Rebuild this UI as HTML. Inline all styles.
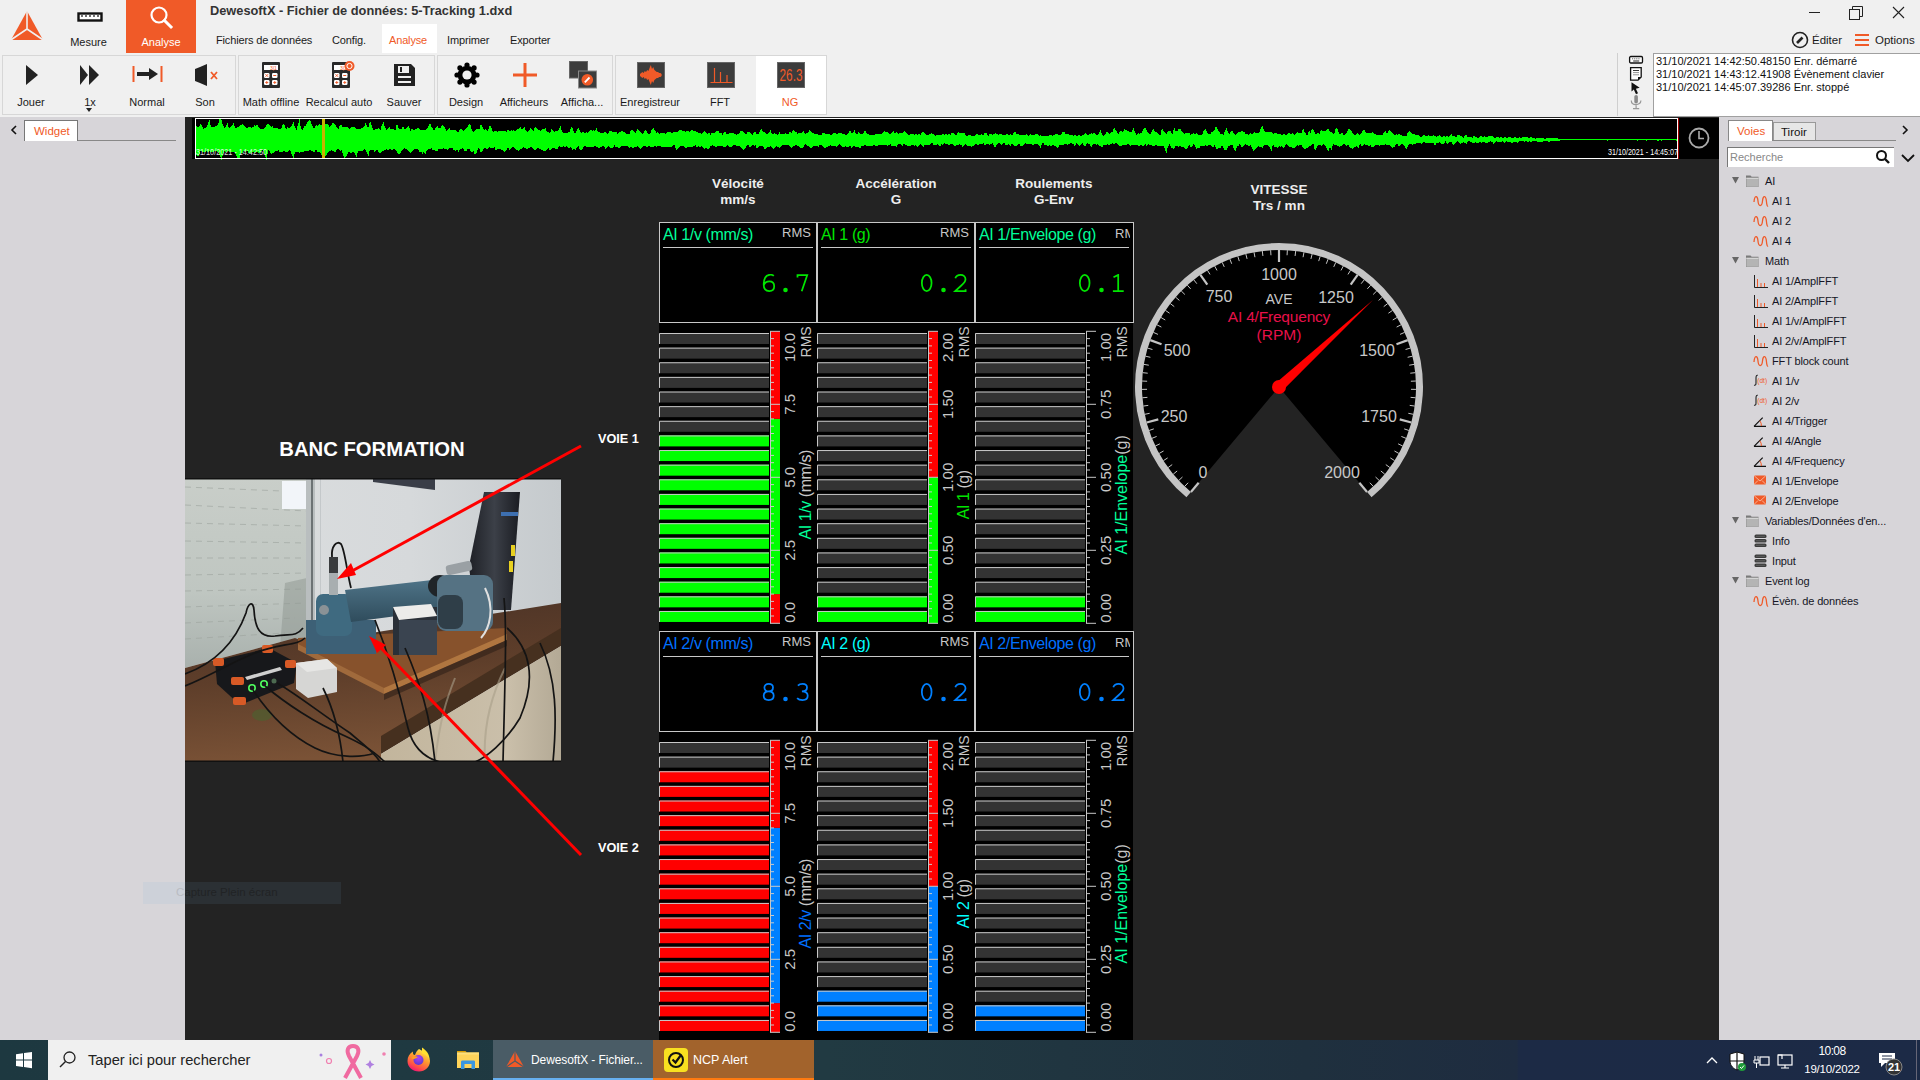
<!DOCTYPE html><html><head><meta charset="utf-8"><style>
*{box-sizing:border-box}
body{margin:0;width:1920px;height:1080px;position:relative;overflow:hidden;background:#f0f0f0;font-family:'Liberation Sans', sans-serif;}
.a{position:absolute}
.t{position:absolute;white-space:nowrap;line-height:1}
.tb{position:absolute;font-size:11px;color:#1a1a1a;white-space:nowrap;line-height:1;text-align:center}
.grp{position:absolute;top:55px;height:60px;border:1px solid #d7d7d7}
.tree{position:absolute;font-size:11px;letter-spacing:-0.15px;color:#151525;white-space:nowrap;line-height:1}
</style></head><body>

<svg class="a" style="left:8px;top:9px" width="40" height="36" viewBox="0 0 40 36">
<polygon points="19,2 3,31 35,31" fill="#f05a28"/>
<path d="M19,2 L19,20 M19,20 L2,31.5 M19,20 L36,31.5" stroke="#f0f0f0" stroke-width="1.6" fill="none"/>
</svg>
<svg class="a" style="left:77px;top:12px" width="26" height="11"><rect x="1.5" y="1.5" width="23" height="7" fill="#fff" stroke="#111" stroke-width="2.4"/>
<path d="M5,3 v2 M9,3 v2 M13,3 v2 M17,3 v2 M21,3 v2" stroke="#111" stroke-width="1.2"/></svg>
<div class="tb" style="left:60px;top:37px;width:57px">Mesure</div>
<div class="a" style="left:126px;top:0;width:70px;height:53px;background:#f05a28"></div>
<svg class="a" style="left:148px;top:5px" width="28" height="26"><circle cx="11" cy="10" r="7.5" fill="none" stroke="#fff" stroke-width="2.2"/><path d="M16.5,15.5 L23,22" stroke="#fff" stroke-width="3" stroke-linecap="square"/></svg>
<div class="tb" style="left:126px;top:37px;width:70px;color:#fff">Analyse</div>
<div class="t" style="left:210px;top:5px;font-size:12.8px;font-weight:bold;color:#333">DewesoftX - Fichier de données: 5-Tracking 1.dxd</div>
<div class="a" style="left:382px;top:24px;width:55px;height:29px;background:#fff"></div>
<div class="t" style="left:216px;top:35px;font-size:11px;letter-spacing:-0.15px;color:#1a1a1a">Fichiers de données</div>
<div class="t" style="left:332px;top:35px;font-size:11px;letter-spacing:-0.15px;color:#1a1a1a">Config.</div>
<div class="t" style="left:389px;top:35px;font-size:11px;letter-spacing:-0.15px;color:#f05a28">Analyse</div>
<div class="t" style="left:447px;top:35px;font-size:11px;letter-spacing:-0.15px;color:#1a1a1a">Imprimer</div>
<div class="t" style="left:510px;top:35px;font-size:11px;letter-spacing:-0.15px;color:#1a1a1a">Exporter</div>
<svg class="a" style="left:1800px;top:0" width="120" height="26">
<path d="M9,12.5 h11" stroke="#222" stroke-width="1"/>
<rect x="49.5" y="9.5" width="10" height="10" fill="none" stroke="#222" stroke-width="1"/>
<path d="M52.5,9.5 v-3 h10 v10 h-3" fill="none" stroke="#222" stroke-width="1"/>
<path d="M93,7 L104,18 M104,7 L93,18" stroke="#222" stroke-width="1.1"/>
</svg>
<svg class="a" style="left:1790px;top:30px" width="20" height="20"><circle cx="10" cy="10" r="7.5" fill="none" stroke="#222" stroke-width="1.6"/><path d="M7,13 L12.5,7.5" stroke="#222" stroke-width="2.6"/></svg>
<div class="t" style="left:1812px;top:35px;font-size:11.5px;color:#1a1a1a">Éditer</div>
<svg class="a" style="left:1854px;top:33px" width="16" height="14"><path d="M1,2 h14 M1,7 h14 M1,12 h14" stroke="#f05a28" stroke-width="2"/></svg>
<div class="t" style="left:1875px;top:35px;font-size:11.5px;color:#1a1a1a">Options</div>
<div class="grp" style="left:2px;width:234px"></div>
<div class="grp" style="left:238px;width:197px"></div>
<div class="grp" style="left:437px;width:176px"></div>
<div class="grp" style="left:615px;width:212px"></div>
<div class="a" style="left:756px;top:56px;width:70px;height:58px;background:#fff"></div>
<svg class="a" style="left:20px;top:62px" width="24" height="26"><polygon points="6,3 18,13 6,23" fill="#222"/></svg>
<div class="tb" style="left:-14px;top:97px;width:90px;color:#1a1a1a">Jouer</div>
<svg class="a" style="left:76px;top:62px" width="28" height="26"><polygon points="4,3 12,13 4,23" fill="#222"/><polygon points="13,3 23,13 13,23" fill="#222"/></svg>
<div class="tb" style="left:45px;top:97px;width:90px;color:#1a1a1a">1x</div>
<svg class="a" style="left:86px;top:108px" width="8" height="5"><polygon points="0,0 6,0 3,4" fill="#222"/></svg>
<svg class="a" style="left:130px;top:63px" width="34" height="24"><path d="M3.5,3 v16 M31.5,3 v16" stroke="#f05a28" stroke-width="2"/><path d="M7,11 h16" stroke="#222" stroke-width="4"/><polygon points="19,5 28,11 19,17" fill="#222"/></svg>
<div class="tb" style="left:102px;top:97px;width:90px;color:#1a1a1a">Normal</div>
<svg class="a" style="left:192px;top:62px" width="30" height="26"><polygon points="3,7 8,5 15,2 15,24 8,21 3,19" fill="#222"/><path d="M19,10 L25,17 M25,10 L19,17" stroke="#f05a28" stroke-width="1.8"/></svg>
<div class="tb" style="left:160px;top:97px;width:90px;color:#1a1a1a">Son</div>
<svg class="a" style="left:260px;top:61px" width="30" height="28"><rect x="2" y="1" width="18" height="26" rx="1" fill="#2a2a2a"/><rect x="4" y="4" width="14" height="5" fill="#fff"/><text x="10" y="8.5" font-size="5" fill="#f05a28" font-family="Liberation Sans">3|1</text><rect x="4" y="12" width="5.5" height="5" rx="1.2" fill="#fff"/><path d="M5.45,13.2 L8.05,15.8 M8.05,13.2 L5.45,15.8" stroke="#f05a28" stroke-width="0.9"/><rect x="12" y="12" width="5.5" height="5" rx="1.2" fill="#fff"/><path d="M13.25,14.5 H16.25" stroke="#f05a28" stroke-width="1"/><rect x="4" y="19" width="5.5" height="5" rx="1.2" fill="#fff"/><path d="M5.25,21.5 H8.25 M6.75,20.0 V23.0" stroke="#f05a28" stroke-width="0.9"/><rect x="12" y="19" width="5.5" height="5" rx="1.2" fill="#fff"/><path d="M13.25,21.5 H16.25 M14.75,20.0 V23.0" stroke="#f05a28" stroke-width="0.9"/></svg>
<div class="tb" style="left:226px;top:97px;width:90px;color:#1a1a1a">Math offline</div>
<svg class="a" style="left:330px;top:61px" width="30" height="28"><rect x="2" y="1" width="18" height="26" rx="1" fill="#2a2a2a"/><rect x="4" y="4" width="14" height="5" fill="#fff"/><text x="10" y="8.5" font-size="5" fill="#f05a28" font-family="Liberation Sans">3|1</text><rect x="4" y="12" width="5.5" height="5" rx="1.2" fill="#fff"/><path d="M5.45,13.2 L8.05,15.8 M8.05,13.2 L5.45,15.8" stroke="#f05a28" stroke-width="0.9"/><rect x="12" y="12" width="5.5" height="5" rx="1.2" fill="#fff"/><path d="M13.25,14.5 H16.25" stroke="#f05a28" stroke-width="1"/><rect x="4" y="19" width="5.5" height="5" rx="1.2" fill="#fff"/><path d="M5.25,21.5 H8.25 M6.75,20.0 V23.0" stroke="#f05a28" stroke-width="0.9"/><rect x="12" y="19" width="5.5" height="5" rx="1.2" fill="#fff"/><path d="M13.25,21.5 H16.25 M14.75,20.0 V23.0" stroke="#f05a28" stroke-width="0.9"/><circle cx="19.5" cy="5" r="5" fill="#f05a28"/><circle cx="19.5" cy="5" r="2.6" fill="none" stroke="#fff" stroke-width="1"/></svg>
<div class="tb" style="left:294px;top:97px;width:90px;color:#1a1a1a">Recalcul auto</div>
<svg class="a" style="left:392px;top:63px" width="26" height="24"><path d="M2,1 h17 l4,4 v18 h-21 z" fill="#222"/><rect x="6" y="3" width="11" height="7" fill="#f0f0f0"/><rect x="8" y="4" width="2" height="5" fill="#222"/><rect x="6" y="13" width="13" height="2" fill="#f0f0f0"/><rect x="6" y="18" width="13" height="2" fill="#f0f0f0"/></svg>
<div class="tb" style="left:359px;top:97px;width:90px;color:#1a1a1a">Sauver</div>
<svg class="a" style="left:454px;top:62px" width="26" height="26" viewBox="-13 -13 26 26"><circle cx="10.00" cy="0.00" r="2.6" fill="#000"/><circle cx="7.07" cy="7.07" r="2.6" fill="#000"/><circle cx="0.00" cy="10.00" r="2.6" fill="#000"/><circle cx="-7.07" cy="7.07" r="2.6" fill="#000"/><circle cx="-10.00" cy="0.00" r="2.6" fill="#000"/><circle cx="-7.07" cy="-7.07" r="2.6" fill="#000"/><circle cx="-0.00" cy="-10.00" r="2.6" fill="#000"/><circle cx="7.07" cy="-7.07" r="2.6" fill="#000"/><circle r="9.3" fill="#000"/><circle r="4.6" fill="#f0f0f0"/></svg>
<div class="tb" style="left:421px;top:97px;width:90px;color:#1a1a1a">Design</div>
<svg class="a" style="left:512px;top:62px" width="26" height="26"><path d="M13,1 v24 M1,13 h24" stroke="#f05a28" stroke-width="3"/></svg>
<div class="tb" style="left:479px;top:97px;width:90px;color:#1a1a1a">Afficheurs</div>
<svg class="a" style="left:568px;top:60px" width="30" height="30"><rect x="1.5" y="1.5" width="18" height="16.5" fill="#3c3c3c" stroke="#666" stroke-width="1"/><rect x="10.5" y="11" width="18" height="17" fill="#3c3c3c" stroke="#888" stroke-width="1"/><circle cx="19.3" cy="19.8" r="5.8" fill="#f05a28"/><path d="M16.8,22.3 L21.5,17.5" stroke="#fff" stroke-width="1.8"/></svg>
<div class="tb" style="left:537px;top:97px;width:90px;color:#1a1a1a">Afficha...</div>
<svg class="a" style="left:637px;top:62px" width="28" height="26"><rect x="0.5" y="0.5" width="27" height="25" fill="#3c3c3c" stroke="#666"/><path d="M3,13 L3.0,12 L4.2,11 L5.4,10 L6.6,11 L7.8,9 L9.0,10 L10.2,8 L11.4,9 L12.6,6 L13.8,3 L15.0,7 L16.2,5 L17.4,8 L18.6,9 L19.8,10 L21.0,10 L22.2,11 L23.4,11 L24.6,12 L24.6,14 L23.4,15 L22.2,15 L21.0,16 L19.8,16 L18.6,17 L17.4,18 L16.2,21 L15.0,19 L13.8,23 L12.6,20 L11.4,17 L10.2,18 L9.0,16 L7.8,17 L6.6,15 L5.4,16 L4.2,15 L3.0,14 Z" fill="#f05a28"/></svg>
<div class="tb" style="left:605px;top:97px;width:90px;color:#1a1a1a">Enregistreur</div>
<svg class="a" style="left:707px;top:62px" width="28" height="26"><rect x="0.5" y="0.5" width="27" height="25" fill="#3c3c3c" stroke="#666"/><path d="M3.5,20.5 h22 M7.5,20 v-14 M13.5,20 v-10 M20,20 v-7" stroke="#f05a28" stroke-width="1.2"/></svg>
<div class="tb" style="left:675px;top:97px;width:90px;color:#1a1a1a">FFT</div>
<svg class="a" style="left:777px;top:62px" width="28" height="26"><rect x="0.5" y="0.5" width="27" height="25" fill="#3c3c3c" stroke="#666"/><text x="2.5" y="19.3" font-size="16" fill="#f05a28" font-family="Liberation Sans" textLength="23" lengthAdjust="spacingAndGlyphs">26.3</text></svg>
<div class="tb" style="left:745px;top:97px;width:90px;color:#f05a28">NG</div>
<div class="a" style="left:1617px;top:53px;width:1px;height:63px;background:#cfcfcf"></div>
<svg class="a" style="left:1627px;top:54px" width="20" height="58">
<rect x="2.6" y="2.5" width="12.9" height="6.5" rx="1.2" fill="#fff" stroke="#111" stroke-width="1.3"/><path d="M5,4.8 h8.5" stroke="#555" stroke-width="0.9" stroke-dasharray="1.2,0.9"/><path d="M6.2,7 h6" stroke="#111" stroke-width="0.9"/>
<path d="M3.6,13.7 H14.2 V23 L11,26.1 H3.6 Z" fill="#fff" stroke="#111" stroke-width="1.3"/><path d="M14.2,23 L11,26.1 V23 Z" fill="#111"/><path d="M6,16.5 h6" stroke="#222" stroke-width="0.9"/><path d="M6,18.6 h6 M6,20.8 h6" stroke="#888" stroke-width="0.9"/>
<polygon points="4.5,28.2 4.5,37.5 6.8,35.6 9,40.2 11,39.2 8.9,34.8 12.7,33.8" fill="#111"/>
<rect x="7.3" y="41" width="3.6" height="8.5" rx="1.8" fill="#8a8a8a"/><path d="M4.3,46.5 C4.3,52 13.9,52 13.9,46.5" stroke="#999" stroke-width="1.2" fill="none"/><path d="M9.1,51.3 V54.5 M6,54.6 h6.2" stroke="#999" stroke-width="1.2"/>
</svg>
<div class="a" style="left:1653px;top:53px;width:267px;height:64px;background:#fff;border:1px solid #a0a0a0;border-right:none"></div>
<div class="t" style="left:1656px;top:56px;font-size:11px;color:#111">31/10/2021 14:42:50.48150 Enr. démarré</div>
<div class="t" style="left:1656px;top:69px;font-size:11px;color:#111">31/10/2021 14:43:12.41908 Évènement clavier</div>
<div class="t" style="left:1656px;top:82px;font-size:11px;color:#111">31/10/2021 14:45:07.39286 Enr. stoppé</div>
<div class="a" style="left:0;top:117px;width:185px;height:923px;background:#d7d5d9"></div>
<svg class="a" style="left:9px;top:124px" width="10" height="12"><path d="M7,2 L3,6 L7,10" stroke="#111" stroke-width="1.6" fill="none"/></svg>
<div class="a" style="left:24px;top:120px;width:54px;height:21px;background:#fff;border:1px solid #777;border-bottom:none"></div>
<div class="a" style="left:78px;top:140px;width:98px;height:1px;background:#888"></div>
<div class="t" style="left:34px;top:126px;font-size:11.5px;color:#f05a28">Widget</div>
<div class="a" style="left:185px;top:117px;width:1534px;height:923px;background:#232323"></div>
<div class="a" style="left:192px;top:118px;width:1527px;height:41px;background:#000"></div>
<svg class="a" style="left:0;top:0" width="1720" height="160"><path d="M196,126.0 L197.5,127.1 L199.0,127.3 L200.5,124.0 L202.0,125.5 L203.5,128.6 L205.0,127.9 L206.5,127.3 L208.0,123.2 L209.5,119.8 L211.0,127.6 L212.5,126.6 L214.0,127.6 L215.5,126.4 L217.0,125.7 L218.5,123.0 L220.0,117.6 L221.5,120.1 L223.0,125.2 L224.5,127.8 L226.0,126.7 L227.5,123.1 L229.0,128.7 L230.5,127.1 L232.0,125.6 L233.5,122.6 L235.0,128.4 L236.5,127.6 L238.0,127.4 L239.5,125.5 L241.0,125.3 L242.5,124.0 L244.0,125.5 L245.5,127.3 L247.0,128.8 L248.5,126.9 L250.0,126.7 L251.5,127.7 L253.0,127.3 L254.5,125.0 L256.0,125.8 L257.5,124.6 L259.0,128.0 L260.5,128.6 L262.0,128.6 L263.5,128.5 L265.0,128.2 L266.5,125.2 L268.0,123.3 L269.5,124.7 L271.0,127.0 L272.5,126.1 L274.0,128.2 L275.5,127.7 L277.0,127.7 L278.5,128.5 L280.0,129.4 L281.5,128.4 L283.0,123.0 L284.5,125.0 L286.0,129.2 L287.5,127.4 L289.0,127.8 L290.5,127.0 L292.0,125.3 L293.5,121.8 L295.0,127.5 L296.5,129.6 L298.0,124.8 L299.5,119.0 L301.0,129.2 L302.5,129.6 L304.0,126.7 L305.5,126.0 L307.0,122.3 L308.5,120.5 L310.0,120.2 L311.5,123.8 L313.0,127.4 L314.5,128.1 L316.0,124.5 L317.5,126.1 L319.0,124.4 L320.5,124.6 L322.0,124.9 L323.5,128.0 L325.0,124.8 L326.5,123.9 L328.0,123.5 L329.5,126.7 L331.0,125.7 L332.5,122.9 L334.0,123.1 L335.5,124.7 L337.0,127.8 L338.5,129.0 L340.0,125.1 L341.5,124.8 L343.0,127.4 L344.5,126.9 L346.0,127.4 L347.5,127.0 L349.0,129.1 L350.5,127.9 L352.0,126.8 L353.5,126.6 L355.0,127.9 L356.5,129.4 L358.0,129.3 L359.5,128.9 L361.0,128.4 L362.5,128.2 L364.0,126.8 L365.5,123.1 L367.0,126.4 L368.5,127.2 L370.0,121.3 L371.5,124.6 L373.0,129.5 L374.5,130.1 L376.0,128.8 L377.5,129.4 L379.0,128.0 L380.5,130.4 L382.0,124.4 L383.5,122.3 L385.0,127.3 L386.5,129.7 L388.0,128.2 L389.5,127.1 L391.0,129.3 L392.5,128.5 L394.0,129.6 L395.5,130.1 L397.0,123.0 L398.5,127.5 L400.0,129.6 L401.5,129.0 L403.0,125.6 L404.5,128.5 L406.0,129.2 L407.5,126.8 L409.0,126.3 L410.5,130.6 L412.0,128.9 L413.5,129.8 L415.0,129.6 L416.5,129.0 L418.0,127.6 L419.5,129.4 L421.0,130.0 L422.5,130.2 L424.0,130.1 L425.5,130.4 L427.0,128.5 L428.5,126.5 L430.0,123.1 L431.5,127.0 L433.0,129.2 L434.5,130.5 L436.0,127.4 L437.5,126.0 L439.0,128.4 L440.5,127.8 L442.0,125.2 L443.5,125.8 L445.0,128.2 L446.5,130.6 L448.0,129.6 L449.5,128.4 L451.0,130.4 L452.5,129.5 L454.0,130.5 L455.5,130.0 L457.0,131.7 L458.5,131.9 L460.0,129.2 L461.5,128.9 L463.0,131.0 L464.5,129.5 L466.0,129.0 L467.5,127.0 L469.0,123.5 L470.5,125.1 L472.0,130.3 L473.5,132.1 L475.0,130.6 L476.5,129.3 L478.0,128.5 L479.5,129.1 L481.0,123.6 L482.5,127.1 L484.0,130.0 L485.5,128.5 L487.0,131.4 L488.5,129.3 L490.0,124.9 L491.5,128.1 L493.0,131.9 L494.5,130.9 L496.0,130.5 L497.5,132.2 L499.0,131.1 L500.5,130.5 L502.0,130.6 L503.5,130.6 L505.0,130.9 L506.5,131.6 L508.0,129.6 L509.5,131.3 L511.0,130.3 L512.5,130.7 L514.0,130.4 L515.5,130.9 L517.0,129.4 L518.5,129.5 L520.0,126.6 L521.5,128.6 L523.0,128.9 L524.5,126.7 L526.0,131.2 L527.5,131.5 L529.0,130.5 L530.5,128.1 L532.0,129.3 L533.5,130.9 L535.0,126.8 L536.5,127.7 L538.0,130.2 L539.5,130.2 L541.0,131.0 L542.5,128.6 L544.0,129.1 L545.5,127.9 L547.0,132.1 L548.5,132.2 L550.0,132.8 L551.5,129.2 L553.0,130.7 L554.5,131.7 L556.0,130.9 L557.5,130.9 L559.0,129.3 L560.5,126.4 L562.0,131.9 L563.5,133.2 L565.0,133.0 L566.5,133.0 L568.0,132.4 L569.5,132.2 L571.0,127.0 L572.5,128.5 L574.0,132.9 L575.5,133.0 L577.0,130.2 L578.5,127.9 L580.0,130.8 L581.5,133.5 L583.0,131.9 L584.5,133.3 L586.0,132.2 L587.5,132.5 L589.0,132.0 L590.5,129.7 L592.0,130.8 L593.5,130.4 L595.0,131.3 L596.5,128.2 L598.0,132.1 L599.5,131.8 L601.0,133.1 L602.5,133.2 L604.0,132.4 L605.5,132.0 L607.0,134.1 L608.5,132.6 L610.0,130.2 L611.5,131.3 L613.0,131.7 L614.5,132.0 L616.0,131.5 L617.5,134.0 L619.0,132.3 L620.5,131.9 L622.0,130.6 L623.5,132.3 L625.0,132.6 L626.5,134.2 L628.0,133.4 L629.5,134.1 L631.0,130.1 L632.5,130.2 L634.0,132.1 L635.5,133.1 L637.0,129.4 L638.5,129.7 L640.0,131.2 L641.5,133.2 L643.0,133.8 L644.5,130.6 L646.0,129.8 L647.5,133.2 L649.0,134.3 L650.5,132.9 L652.0,129.2 L653.5,128.4 L655.0,130.2 L656.5,132.7 L658.0,132.2 L659.5,134.2 L661.0,133.0 L662.5,132.9 L664.0,132.5 L665.5,133.6 L667.0,132.7 L668.5,131.9 L670.0,131.6 L671.5,132.8 L673.0,132.6 L674.5,131.8 L676.0,132.2 L677.5,132.0 L679.0,130.8 L680.5,129.5 L682.0,131.0 L683.5,131.0 L685.0,131.7 L686.5,131.4 L688.0,131.0 L689.5,132.4 L691.0,130.0 L692.5,129.9 L694.0,131.4 L695.5,131.1 L697.0,131.8 L698.5,133.2 L700.0,133.3 L701.5,133.6 L703.0,132.9 L704.5,131.4 L706.0,133.0 L707.5,133.6 L709.0,132.4 L710.5,134.5 L712.0,132.5 L713.5,133.3 L715.0,132.5 L716.5,131.3 L718.0,130.8 L719.5,132.5 L721.0,132.9 L722.5,134.6 L724.0,132.1 L725.5,132.3 L727.0,134.4 L728.5,133.7 L730.0,132.8 L731.5,133.3 L733.0,133.0 L734.5,133.9 L736.0,134.6 L737.5,134.4 L739.0,133.3 L740.5,131.1 L742.0,131.0 L743.5,132.5 L745.0,134.0 L746.5,133.8 L748.0,131.2 L749.5,132.3 L751.0,133.1 L752.5,134.7 L754.0,132.6 L755.5,132.0 L757.0,134.3 L758.5,134.0 L760.0,130.5 L761.5,129.3 L763.0,131.8 L764.5,131.7 L766.0,133.7 L767.5,133.8 L769.0,132.8 L770.5,129.8 L772.0,134.0 L773.5,133.5 L775.0,133.4 L776.5,134.4 L778.0,135.0 L779.5,132.3 L781.0,134.2 L782.5,133.6 L784.0,134.6 L785.5,133.3 L787.0,134.5 L788.5,134.3 L790.0,131.2 L791.5,133.0 L793.0,129.9 L794.5,131.4 L796.0,131.8 L797.5,133.6 L799.0,133.1 L800.5,133.3 L802.0,133.0 L803.5,130.7 L805.0,134.4 L806.5,133.2 L808.0,133.0 L809.5,130.4 L811.0,131.0 L812.5,132.9 L814.0,133.8 L815.5,133.9 L817.0,134.1 L818.5,135.0 L820.0,134.7 L821.5,134.9 L823.0,132.8 L824.5,133.2 L826.0,134.4 L827.5,134.0 L829.0,133.9 L830.5,134.8 L832.0,134.7 L833.5,133.2 L835.0,132.5 L836.5,134.1 L838.0,133.6 L839.5,133.3 L841.0,132.7 L842.5,134.3 L844.0,133.3 L845.5,135.3 L847.0,134.9 L848.5,133.2 L850.0,129.6 L851.5,133.1 L853.0,133.6 L854.5,130.1 L856.0,134.3 L857.5,133.6 L859.0,131.9 L860.5,133.9 L862.0,134.6 L863.5,133.2 L865.0,130.4 L866.5,132.8 L868.0,134.0 L869.5,135.5 L871.0,134.5 L872.5,134.7 L874.0,135.1 L875.5,134.2 L877.0,134.3 L878.5,134.3 L880.0,134.2 L881.5,134.4 L883.0,132.7 L884.5,130.9 L886.0,132.6 L887.5,131.8 L889.0,134.3 L890.5,133.7 L892.0,132.5 L893.5,130.6 L895.0,133.5 L896.5,131.5 L898.0,133.8 L899.5,133.1 L901.0,133.4 L902.5,133.1 L904.0,131.0 L905.5,132.4 L907.0,133.7 L908.5,135.2 L910.0,134.2 L911.5,134.4 L913.0,134.4 L914.5,134.5 L916.0,134.0 L917.5,135.2 L919.0,133.9 L920.5,134.9 L922.0,131.7 L923.5,132.1 L925.0,134.1 L926.5,135.1 L928.0,135.2 L929.5,134.5 L931.0,133.4 L932.5,133.7 L934.0,134.2 L935.5,135.7 L937.0,134.9 L938.5,134.8 L940.0,135.3 L941.5,134.7 L943.0,134.0 L944.5,134.7 L946.0,134.0 L947.5,135.2 L949.0,133.8 L950.5,135.3 L952.0,132.6 L953.5,133.4 L955.0,134.7 L956.5,135.3 L958.0,132.1 L959.5,133.2 L961.0,133.5 L962.5,132.6 L964.0,132.9 L965.5,134.5 L967.0,136.2 L968.5,134.9 L970.0,134.4 L971.5,136.1 L973.0,136.1 L974.5,135.8 L976.0,134.0 L977.5,134.2 L979.0,135.6 L980.5,134.5 L982.0,134.3 L983.5,135.0 L985.0,132.7 L986.5,132.7 L988.0,136.3 L989.5,134.5 L991.0,133.1 L992.5,135.1 L994.0,134.2 L995.5,133.4 L997.0,134.3 L998.5,134.6 L1000.0,133.7 L1001.5,133.5 L1003.0,135.2 L1004.5,135.3 L1006.0,134.5 L1007.5,134.2 L1009.0,136.0 L1010.5,134.1 L1012.0,135.5 L1013.5,132.6 L1015.0,131.5 L1016.5,134.0 L1018.0,134.1 L1019.5,135.0 L1021.0,134.9 L1022.5,134.5 L1024.0,135.9 L1025.5,134.5 L1027.0,134.1 L1028.5,135.5 L1030.0,134.0 L1031.5,135.1 L1033.0,135.0 L1034.5,134.7 L1036.0,134.3 L1037.5,134.4 L1039.0,135.8 L1040.5,135.3 L1042.0,135.7 L1043.5,135.5 L1045.0,136.0 L1046.5,136.1 L1048.0,135.9 L1049.5,134.8 L1051.0,134.7 L1052.5,135.9 L1054.0,135.3 L1055.5,133.5 L1057.0,133.9 L1058.5,135.0 L1060.0,135.6 L1061.5,134.0 L1063.0,131.5 L1064.5,132.2 L1066.0,134.4 L1067.5,133.6 L1069.0,134.5 L1070.5,135.3 L1072.0,135.0 L1073.5,136.3 L1075.0,134.9 L1076.5,135.5 L1078.0,135.5 L1079.5,134.7 L1081.0,136.2 L1082.5,134.9 L1084.0,134.4 L1085.5,132.6 L1087.0,134.5 L1088.5,134.7 L1090.0,133.8 L1091.5,133.4 L1093.0,133.7 L1094.5,133.0 L1096.0,135.2 L1097.5,135.4 L1099.0,132.7 L1100.5,129.7 L1102.0,134.7 L1103.5,136.4 L1105.0,134.7 L1106.5,132.1 L1108.0,132.1 L1109.5,134.2 L1111.0,132.7 L1112.5,131.8 L1114.0,127.1 L1115.5,129.9 L1117.0,132.2 L1118.5,134.2 L1120.0,130.5 L1121.5,131.5 L1123.0,131.5 L1124.5,128.8 L1126.0,130.1 L1127.5,130.7 L1129.0,131.8 L1130.5,132.3 L1132.0,131.4 L1133.5,128.4 L1135.0,132.9 L1136.5,134.7 L1138.0,133.2 L1139.5,133.8 L1141.0,133.1 L1142.5,131.5 L1144.0,127.1 L1145.5,128.4 L1147.0,131.5 L1148.5,133.1 L1150.0,134.8 L1151.5,132.2 L1153.0,128.3 L1154.5,131.3 L1156.0,131.8 L1157.5,133.0 L1159.0,134.5 L1160.5,134.8 L1162.0,128.3 L1163.5,131.0 L1165.0,133.2 L1166.5,134.1 L1168.0,130.6 L1169.5,130.8 L1171.0,131.8 L1172.5,134.4 L1174.0,127.3 L1175.5,130.8 L1177.0,131.3 L1178.5,129.4 L1180.0,128.4 L1181.5,131.0 L1183.0,132.0 L1184.5,133.6 L1186.0,132.6 L1187.5,132.9 L1189.0,132.6 L1190.5,134.5 L1192.0,133.8 L1193.5,133.2 L1195.0,134.0 L1196.5,133.3 L1198.0,134.4 L1199.5,135.2 L1201.0,134.7 L1202.5,134.2 L1204.0,130.0 L1205.5,129.1 L1207.0,132.5 L1208.5,134.3 L1210.0,134.1 L1211.5,132.4 L1213.0,132.3 L1214.5,129.6 L1216.0,125.5 L1217.5,129.4 L1219.0,131.6 L1220.5,133.8 L1222.0,133.4 L1223.5,134.7 L1225.0,130.8 L1226.5,127.9 L1228.0,133.2 L1229.5,134.0 L1231.0,131.7 L1232.5,131.1 L1234.0,133.9 L1235.5,135.1 L1237.0,133.1 L1238.5,132.0 L1240.0,132.4 L1241.5,131.2 L1243.0,131.4 L1244.5,132.3 L1246.0,134.3 L1247.5,134.3 L1249.0,134.7 L1250.5,133.2 L1252.0,134.0 L1253.5,132.6 L1255.0,132.3 L1256.5,133.1 L1258.0,133.7 L1259.5,132.3 L1261.0,128.0 L1262.5,126.3 L1264.0,130.7 L1265.5,132.1 L1267.0,131.5 L1268.5,131.9 L1270.0,132.6 L1271.5,132.3 L1273.0,133.8 L1274.5,133.2 L1276.0,132.5 L1277.5,134.1 L1279.0,133.4 L1280.5,133.9 L1282.0,135.4 L1283.5,133.9 L1285.0,134.8 L1286.5,134.6 L1288.0,133.5 L1289.5,133.3 L1291.0,134.0 L1292.5,132.8 L1294.0,134.8 L1295.5,134.5 L1297.0,131.7 L1298.5,133.5 L1300.0,132.2 L1301.5,133.5 L1303.0,127.6 L1304.5,131.5 L1306.0,134.5 L1307.5,135.3 L1309.0,130.2 L1310.5,132.9 L1312.0,128.1 L1313.5,129.6 L1315.0,133.9 L1316.5,134.3 L1318.0,132.8 L1319.5,133.8 L1321.0,130.4 L1322.5,130.5 L1324.0,130.9 L1325.5,131.1 L1327.0,129.1 L1328.5,129.0 L1330.0,132.2 L1331.5,131.8 L1333.0,134.1 L1334.5,133.0 L1336.0,127.5 L1337.5,128.9 L1339.0,133.8 L1340.5,133.8 L1342.0,132.0 L1343.5,135.3 L1345.0,134.2 L1346.5,133.2 L1348.0,129.5 L1349.5,129.2 L1351.0,130.5 L1352.5,132.7 L1354.0,134.9 L1355.5,134.6 L1357.0,133.1 L1358.5,134.2 L1360.0,135.1 L1361.5,133.1 L1363.0,130.7 L1364.5,130.0 L1366.0,132.6 L1367.5,133.3 L1369.0,132.8 L1370.5,133.3 L1372.0,132.3 L1373.5,132.7 L1375.0,134.2 L1376.5,134.9 L1378.0,134.9 L1379.5,134.9 L1381.0,135.0 L1382.5,134.8 L1384.0,132.4 L1385.5,131.4 L1387.0,133.9 L1388.5,131.2 L1390.0,129.9 L1391.5,132.2 L1393.0,133.9 L1394.5,135.4 L1396.0,134.2 L1397.5,134.8 L1399.0,133.9 L1400.5,134.6 L1402.0,135.9 L1403.5,135.5 L1405.0,135.8 L1406.5,135.6 L1408.0,132.2 L1409.5,130.9 L1411.0,132.3 L1412.5,133.5 L1414.0,134.3 L1415.5,134.9 L1417.0,135.2 L1418.5,135.3 L1420.0,136.4 L1421.5,136.8 L1423.0,135.1 L1424.5,135.1 L1426.0,136.1 L1427.5,135.5 L1429.0,135.3 L1430.5,136.4 L1432.0,136.3 L1433.5,135.3 L1435.0,136.1 L1436.5,137.2 L1438.0,135.9 L1439.5,135.0 L1441.0,137.2 L1442.5,137.0 L1444.0,135.5 L1445.5,136.7 L1447.0,135.8 L1448.5,136.8 L1450.0,136.3 L1451.5,133.9 L1453.0,136.6 L1454.5,136.0 L1456.0,137.9 L1457.5,135.3 L1459.0,135.0 L1460.5,135.8 L1462.0,136.6 L1463.5,137.9 L1465.0,134.9 L1466.5,135.1 L1468.0,137.6 L1469.5,137.2 L1471.0,136.5 L1472.5,137.7 L1474.0,135.1 L1475.5,136.6 L1477.0,137.4 L1478.5,138.1 L1480.0,136.3 L1481.5,136.1 L1483.0,137.1 L1484.5,135.9 L1486.0,137.0 L1487.5,137.2 L1489.0,135.8 L1490.5,136.3 L1492.0,135.9 L1493.5,137.2 L1495.0,138.1 L1496.5,137.4 L1498.0,137.4 L1499.5,137.7 L1501.0,136.7 L1502.5,137.8 L1504.0,137.6 L1505.5,137.3 L1507.0,138.2 L1508.5,137.3 L1510.0,136.4 L1511.5,137.9 L1513.0,138.0 L1514.5,137.3 L1516.0,137.3 L1517.5,138.4 L1519.0,137.2 L1520.5,137.8 L1522.0,137.8 L1523.5,136.5 L1525.0,137.4 L1526.5,137.4 L1528.0,137.5 L1529.5,137.9 L1531.0,137.2 L1532.5,138.0 L1534.0,137.7 L1535.5,138.5 L1537.0,137.7 L1538.5,137.7 L1540.0,138.6 L1541.5,137.9 L1543.0,137.6 L1544.5,138.5 L1546.0,138.5 L1547.5,138.0 L1549.0,138.4 L1550.5,137.8 L1552.0,138.5 L1553.5,138.0 L1555.0,137.7 L1556.5,138.1 L1558.0,138.6 L1559.5,138.7 L1561.0,138.6 L1562.5,138.5 L1564.0,139.1 L1565.5,138.8 L1567.0,139.1 L1568.5,139.1 L1570.0,139.0 L1571.5,139.0 L1573.0,139.1 L1574.5,138.9 L1576.0,138.9 L1577.5,138.7 L1579.0,138.7 L1580.5,139.1 L1582.0,138.9 L1583.5,139.1 L1585.0,138.7 L1586.5,138.7 L1588.0,139.0 L1589.5,139.2 L1591.0,139.1 L1592.5,139.0 L1594.0,139.0 L1595.5,139.0 L1597.0,139.2 L1598.5,138.7 L1600.0,138.9 L1601.5,139.2 L1603.0,139.0 L1604.5,139.2 L1606.0,139.0 L1607.5,139.0 L1609.0,139.2 L1610.5,138.8 L1612.0,138.8 L1613.5,139.2 L1615.0,138.7 L1616.5,139.1 L1618.0,139.1 L1619.5,139.1 L1621.0,139.0 L1622.5,138.9 L1624.0,139.1 L1625.5,139.1 L1627.0,138.6 L1628.5,138.8 L1630.0,139.1 L1631.5,139.2 L1633.0,138.7 L1634.5,139.1 L1636.0,139.2 L1637.5,138.7 L1639.0,139.0 L1640.5,139.2 L1642.0,139.2 L1643.5,139.1 L1645.0,138.7 L1646.5,138.7 L1648.0,139.2 L1649.5,139.2 L1651.0,138.7 L1652.5,139.0 L1654.0,138.8 L1655.5,139.1 L1657.0,138.6 L1658.5,139.2 L1660.0,139.1 L1661.5,139.1 L1663.0,138.7 L1664.5,138.6 L1666.0,138.8 L1667.5,139.2 L1669.0,139.2 L1670.5,139.0 L1672.0,138.9 L1673.5,138.7 L1675.0,139.0 L1676.5,138.8 L1676.5,140.6 L1675.0,140.2 L1673.5,140.0 L1672.0,140.0 L1670.5,140.0 L1669.0,140.3 L1667.5,140.5 L1666.0,140.0 L1664.5,140.4 L1663.0,140.1 L1661.5,140.5 L1660.0,140.3 L1658.5,140.5 L1657.0,140.5 L1655.5,140.2 L1654.0,140.3 L1652.5,140.0 L1651.0,140.1 L1649.5,140.1 L1648.0,140.2 L1646.5,140.5 L1645.0,140.3 L1643.5,140.1 L1642.0,140.4 L1640.5,140.3 L1639.0,140.4 L1637.5,140.6 L1636.0,140.1 L1634.5,140.4 L1633.0,140.4 L1631.5,140.0 L1630.0,140.0 L1628.5,140.3 L1627.0,140.5 L1625.5,140.3 L1624.0,140.6 L1622.5,140.0 L1621.0,140.1 L1619.5,140.3 L1618.0,140.1 L1616.5,140.0 L1615.0,140.2 L1613.5,140.4 L1612.0,140.0 L1610.5,140.2 L1609.0,140.4 L1607.5,140.5 L1606.0,140.4 L1604.5,140.3 L1603.0,140.0 L1601.5,140.1 L1600.0,140.4 L1598.5,140.4 L1597.0,140.5 L1595.5,140.2 L1594.0,140.3 L1592.5,140.1 L1591.0,140.1 L1589.5,140.0 L1588.0,140.3 L1586.5,140.3 L1585.0,140.4 L1583.5,140.3 L1582.0,140.4 L1580.5,140.2 L1579.0,140.1 L1577.5,140.5 L1576.0,140.0 L1574.5,140.0 L1573.0,140.4 L1571.5,140.4 L1570.0,140.0 L1568.5,140.2 L1567.0,140.1 L1565.5,140.4 L1564.0,140.2 L1562.5,140.3 L1561.0,140.3 L1559.5,140.9 L1558.0,140.6 L1556.5,140.5 L1555.0,141.0 L1553.5,141.4 L1552.0,141.1 L1550.5,141.2 L1549.0,141.9 L1547.5,141.0 L1546.0,141.4 L1544.5,141.1 L1543.0,141.7 L1541.5,141.6 L1540.0,142.2 L1538.5,141.5 L1537.0,141.6 L1535.5,140.8 L1534.0,141.5 L1532.5,140.7 L1531.0,142.2 L1529.5,141.2 L1528.0,142.1 L1526.5,140.8 L1525.0,141.7 L1523.5,141.5 L1522.0,141.0 L1520.5,141.4 L1519.0,140.9 L1517.5,143.0 L1516.0,141.1 L1514.5,142.5 L1513.0,142.4 L1511.5,142.8 L1510.0,142.2 L1508.5,142.4 L1507.0,141.1 L1505.5,142.0 L1504.0,143.1 L1502.5,141.2 L1501.0,142.1 L1499.5,141.7 L1498.0,142.5 L1496.5,141.4 L1495.0,142.2 L1493.5,143.5 L1492.0,142.0 L1490.5,141.3 L1489.0,141.7 L1487.5,143.0 L1486.0,143.1 L1484.5,141.6 L1483.0,142.2 L1481.5,142.9 L1480.0,141.0 L1478.5,143.4 L1477.0,143.2 L1475.5,141.8 L1474.0,143.3 L1472.5,143.0 L1471.0,141.7 L1469.5,141.3 L1468.0,141.3 L1466.5,143.6 L1465.0,142.7 L1463.5,142.4 L1462.0,142.9 L1460.5,144.5 L1459.0,142.6 L1457.5,141.3 L1456.0,142.1 L1454.5,143.9 L1453.0,145.3 L1451.5,142.4 L1450.0,142.2 L1448.5,143.1 L1447.0,144.3 L1445.5,141.4 L1444.0,143.4 L1442.5,144.4 L1441.0,144.4 L1439.5,141.5 L1438.0,143.0 L1436.5,143.3 L1435.0,145.3 L1433.5,143.1 L1432.0,143.5 L1430.5,143.3 L1429.0,143.4 L1427.5,143.3 L1426.0,143.3 L1424.5,142.2 L1423.0,142.5 L1421.5,143.6 L1420.0,143.4 L1418.5,142.6 L1417.0,142.8 L1415.5,143.7 L1414.0,144.4 L1412.5,144.5 L1411.0,144.4 L1409.5,144.1 L1408.0,145.9 L1406.5,148.6 L1405.0,147.0 L1403.5,145.2 L1402.0,143.1 L1400.5,145.4 L1399.0,146.4 L1397.5,144.2 L1396.0,143.7 L1394.5,146.8 L1393.0,147.7 L1391.5,147.4 L1390.0,145.0 L1388.5,144.5 L1387.0,145.3 L1385.5,144.0 L1384.0,145.3 L1382.5,144.8 L1381.0,144.5 L1379.5,145.7 L1378.0,145.0 L1376.5,144.7 L1375.0,145.7 L1373.5,147.1 L1372.0,147.2 L1370.5,145.3 L1369.0,146.1 L1367.5,144.9 L1366.0,145.6 L1364.5,144.0 L1363.0,145.8 L1361.5,145.8 L1360.0,143.8 L1358.5,148.2 L1357.0,145.7 L1355.5,146.9 L1354.0,146.6 L1352.5,149.5 L1351.0,147.9 L1349.5,146.9 L1348.0,143.8 L1346.5,146.4 L1345.0,144.4 L1343.5,144.0 L1342.0,146.2 L1340.5,146.4 L1339.0,146.8 L1337.5,145.7 L1336.0,145.4 L1334.5,144.8 L1333.0,143.5 L1331.5,150.5 L1330.0,146.6 L1328.5,151.3 L1327.0,149.5 L1325.5,146.3 L1324.0,143.8 L1322.5,145.4 L1321.0,145.6 L1319.5,144.5 L1318.0,145.1 L1316.5,147.7 L1315.0,151.0 L1313.5,144.4 L1312.0,144.3 L1310.5,145.8 L1309.0,145.7 L1307.5,148.4 L1306.0,148.5 L1304.5,149.3 L1303.0,147.9 L1301.5,145.4 L1300.0,144.3 L1298.5,145.6 L1297.0,145.2 L1295.5,146.7 L1294.0,148.4 L1292.5,147.9 L1291.0,146.9 L1289.5,146.9 L1288.0,145.5 L1286.5,144.3 L1285.0,145.7 L1283.5,148.2 L1282.0,146.3 L1280.5,146.6 L1279.0,146.3 L1277.5,148.1 L1276.0,147.1 L1274.5,146.7 L1273.0,143.7 L1271.5,150.8 L1270.0,147.7 L1268.5,146.3 L1267.0,144.6 L1265.5,145.2 L1264.0,145.6 L1262.5,147.7 L1261.0,147.4 L1259.5,146.6 L1258.0,146.0 L1256.5,147.6 L1255.0,149.2 L1253.5,151.1 L1252.0,148.1 L1250.5,144.8 L1249.0,147.1 L1247.5,145.0 L1246.0,144.3 L1244.5,144.5 L1243.0,147.0 L1241.5,146.9 L1240.0,143.8 L1238.5,145.6 L1237.0,146.0 L1235.5,151.3 L1234.0,149.3 L1232.5,144.5 L1231.0,144.6 L1229.5,146.4 L1228.0,146.5 L1226.5,150.1 L1225.0,150.5 L1223.5,148.2 L1222.0,145.5 L1220.5,147.7 L1219.0,147.9 L1217.5,148.8 L1216.0,148.4 L1214.5,145.1 L1213.0,147.5 L1211.5,146.1 L1210.0,144.5 L1208.5,145.3 L1207.0,146.9 L1205.5,145.0 L1204.0,146.3 L1202.5,146.2 L1201.0,145.8 L1199.5,147.8 L1198.0,147.5 L1196.5,148.5 L1195.0,145.6 L1193.5,144.4 L1192.0,146.9 L1190.5,147.2 L1189.0,144.6 L1187.5,148.3 L1186.0,148.9 L1184.5,148.4 L1183.0,146.3 L1181.5,147.0 L1180.0,145.9 L1178.5,147.3 L1177.0,145.4 L1175.5,146.0 L1174.0,149.6 L1172.5,148.3 L1171.0,147.2 L1169.5,144.3 L1168.0,146.2 L1166.5,153.2 L1165.0,149.4 L1163.5,146.2 L1162.0,145.7 L1160.5,146.3 L1159.0,146.3 L1157.5,146.0 L1156.0,144.9 L1154.5,146.0 L1153.0,146.0 L1151.5,145.4 L1150.0,145.5 L1148.5,144.1 L1147.0,146.1 L1145.5,144.4 L1144.0,145.5 L1142.5,146.4 L1141.0,144.9 L1139.5,145.6 L1138.0,145.5 L1136.5,144.7 L1135.0,145.2 L1133.5,144.8 L1132.0,145.1 L1130.5,145.8 L1129.0,144.5 L1127.5,144.2 L1126.0,145.0 L1124.5,145.2 L1123.0,144.6 L1121.5,145.7 L1120.0,145.8 L1118.5,145.0 L1117.0,143.5 L1115.5,143.3 L1114.0,144.3 L1112.5,143.2 L1111.0,143.7 L1109.5,145.3 L1108.0,144.3 L1106.5,144.6 L1105.0,145.2 L1103.5,145.1 L1102.0,147.4 L1100.5,145.6 L1099.0,145.5 L1097.5,144.3 L1096.0,144.7 L1094.5,143.9 L1093.0,143.4 L1091.5,147.4 L1090.0,144.8 L1088.5,143.7 L1087.0,143.1 L1085.5,145.9 L1084.0,145.4 L1082.5,143.4 L1081.0,144.2 L1079.5,146.3 L1078.0,144.7 L1076.5,142.8 L1075.0,146.4 L1073.5,144.2 L1072.0,143.5 L1070.5,143.4 L1069.0,143.7 L1067.5,144.9 L1066.0,144.2 L1064.5,144.4 L1063.0,144.9 L1061.5,145.4 L1060.0,144.6 L1058.5,147.0 L1057.0,148.0 L1055.5,146.4 L1054.0,145.1 L1052.5,145.2 L1051.0,146.5 L1049.5,145.3 L1048.0,146.1 L1046.5,144.7 L1045.0,145.6 L1043.5,143.2 L1042.0,143.2 L1040.5,147.9 L1039.0,145.5 L1037.5,144.3 L1036.0,143.2 L1034.5,144.3 L1033.0,145.0 L1031.5,144.2 L1030.0,143.6 L1028.5,144.2 L1027.0,144.6 L1025.5,143.1 L1024.0,145.1 L1022.5,145.7 L1021.0,146.8 L1019.5,144.0 L1018.0,144.0 L1016.5,145.7 L1015.0,145.8 L1013.5,145.3 L1012.0,143.8 L1010.5,145.8 L1009.0,144.3 L1007.5,144.5 L1006.0,145.7 L1004.5,142.8 L1003.0,143.3 L1001.5,144.8 L1000.0,143.7 L998.5,143.0 L997.0,144.1 L995.5,147.4 L994.0,146.6 L992.5,143.2 L991.0,143.9 L989.5,145.5 L988.0,143.7 L986.5,143.7 L985.0,145.1 L983.5,143.4 L982.0,144.6 L980.5,144.3 L979.0,144.5 L977.5,144.5 L976.0,144.1 L974.5,145.0 L973.0,145.8 L971.5,146.7 L970.0,145.7 L968.5,145.6 L967.0,145.7 L965.5,144.1 L964.0,145.6 L962.5,146.9 L961.0,144.8 L959.5,144.3 L958.0,145.3 L956.5,145.3 L955.0,146.0 L953.5,145.1 L952.0,143.7 L950.5,144.4 L949.0,144.9 L947.5,144.2 L946.0,143.7 L944.5,143.4 L943.0,145.0 L941.5,144.1 L940.0,146.5 L938.5,144.5 L937.0,144.4 L935.5,145.1 L934.0,145.6 L932.5,143.3 L931.0,143.6 L929.5,144.8 L928.0,144.6 L926.5,145.0 L925.0,144.7 L923.5,147.1 L922.0,144.9 L920.5,144.3 L919.0,145.7 L917.5,146.7 L916.0,145.1 L914.5,145.5 L913.0,144.3 L911.5,145.0 L910.0,146.1 L908.5,146.3 L907.0,145.7 L905.5,144.5 L904.0,143.7 L902.5,145.6 L901.0,144.2 L899.5,144.2 L898.0,144.6 L896.5,146.8 L895.0,146.2 L893.5,146.3 L892.0,146.6 L890.5,143.8 L889.0,145.0 L887.5,145.8 L886.0,144.7 L884.5,144.7 L883.0,144.9 L881.5,145.2 L880.0,145.2 L878.5,144.8 L877.0,146.1 L875.5,145.9 L874.0,144.1 L872.5,145.6 L871.0,145.9 L869.5,145.9 L868.0,146.7 L866.5,145.8 L865.0,144.2 L863.5,146.2 L862.0,145.5 L860.5,148.2 L859.0,147.2 L857.5,146.9 L856.0,147.1 L854.5,145.9 L853.0,146.8 L851.5,147.9 L850.0,145.8 L848.5,147.4 L847.0,146.8 L845.5,146.4 L844.0,146.8 L842.5,147.1 L841.0,145.3 L839.5,144.0 L838.0,145.3 L836.5,146.7 L835.0,145.4 L833.5,146.1 L832.0,145.8 L830.5,145.3 L829.0,145.7 L827.5,146.5 L826.0,147.3 L824.5,148.3 L823.0,146.9 L821.5,145.3 L820.0,144.4 L818.5,146.6 L817.0,145.8 L815.5,145.9 L814.0,145.6 L812.5,147.3 L811.0,148.6 L809.5,147.1 L808.0,145.9 L806.5,144.9 L805.0,143.9 L803.5,147.4 L802.0,148.2 L800.5,147.8 L799.0,146.0 L797.5,146.2 L796.0,144.4 L794.5,146.1 L793.0,145.8 L791.5,148.5 L790.0,146.0 L788.5,144.9 L787.0,145.0 L785.5,144.5 L784.0,145.2 L782.5,145.2 L781.0,146.2 L779.5,148.0 L778.0,146.7 L776.5,146.2 L775.0,147.2 L773.5,148.5 L772.0,147.5 L770.5,145.6 L769.0,147.4 L767.5,147.0 L766.0,149.1 L764.5,149.1 L763.0,146.3 L761.5,146.4 L760.0,145.6 L758.5,147.0 L757.0,148.9 L755.5,145.3 L754.0,145.8 L752.5,144.5 L751.0,147.4 L749.5,147.3 L748.0,144.6 L746.5,145.5 L745.0,148.5 L743.5,150.2 L742.0,148.8 L740.5,146.9 L739.0,145.3 L737.5,146.1 L736.0,145.3 L734.5,145.4 L733.0,144.9 L731.5,146.8 L730.0,147.5 L728.5,145.9 L727.0,145.1 L725.5,146.7 L724.0,146.9 L722.5,146.3 L721.0,146.3 L719.5,146.1 L718.0,145.6 L716.5,147.0 L715.0,146.7 L713.5,145.6 L712.0,145.3 L710.5,146.4 L709.0,149.3 L707.5,149.3 L706.0,147.5 L704.5,149.2 L703.0,147.7 L701.5,146.0 L700.0,147.6 L698.5,146.4 L697.0,147.5 L695.5,144.6 L694.0,146.1 L692.5,146.5 L691.0,146.9 L689.5,147.4 L688.0,147.2 L686.5,147.8 L685.0,148.1 L683.5,146.0 L682.0,146.4 L680.5,145.7 L679.0,147.6 L677.5,149.4 L676.0,149.6 L674.5,144.9 L673.0,145.8 L671.5,146.5 L670.0,147.2 L668.5,147.0 L667.0,147.1 L665.5,146.6 L664.0,146.8 L662.5,146.5 L661.0,146.5 L659.5,145.5 L658.0,145.8 L656.5,146.7 L655.0,146.2 L653.5,146.5 L652.0,146.8 L650.5,146.5 L649.0,145.6 L647.5,147.5 L646.0,146.9 L644.5,145.7 L643.0,145.8 L641.5,148.4 L640.0,149.3 L638.5,146.6 L637.0,146.3 L635.5,147.0 L634.0,147.5 L632.5,147.9 L631.0,147.1 L629.5,147.9 L628.0,146.3 L626.5,146.2 L625.0,146.2 L623.5,145.5 L622.0,145.5 L620.5,147.4 L619.0,147.9 L617.5,147.3 L616.0,147.4 L614.5,145.2 L613.0,147.4 L611.5,147.9 L610.0,147.6 L608.5,145.8 L607.0,147.7 L605.5,149.1 L604.0,146.5 L602.5,146.0 L601.0,146.8 L599.5,147.8 L598.0,147.4 L596.5,146.8 L595.0,146.0 L593.5,146.8 L592.0,147.6 L590.5,147.3 L589.0,146.8 L587.5,147.4 L586.0,146.2 L584.5,145.9 L583.0,148.0 L581.5,150.0 L580.0,150.1 L578.5,146.3 L577.0,147.0 L575.5,150.2 L574.0,148.9 L572.5,149.9 L571.0,147.4 L569.5,147.7 L568.0,148.0 L566.5,146.1 L565.0,147.0 L563.5,146.4 L562.0,147.6 L560.5,146.6 L559.0,145.7 L557.5,148.6 L556.0,149.1 L554.5,148.2 L553.0,147.3 L551.5,149.5 L550.0,150.3 L548.5,148.4 L547.0,148.9 L545.5,150.9 L544.0,150.7 L542.5,150.4 L541.0,149.6 L539.5,149.0 L538.0,148.0 L536.5,148.8 L535.0,150.2 L533.5,148.7 L532.0,147.2 L530.5,147.4 L529.0,147.9 L527.5,149.5 L526.0,148.1 L524.5,147.5 L523.0,146.7 L521.5,149.2 L520.0,149.0 L518.5,150.7 L517.0,150.2 L515.5,149.2 L514.0,147.4 L512.5,147.3 L511.0,148.4 L509.5,150.1 L508.0,147.3 L506.5,150.1 L505.0,151.8 L503.5,151.0 L502.0,149.7 L500.5,149.3 L499.0,149.1 L497.5,149.3 L496.0,150.9 L494.5,146.8 L493.0,148.5 L491.5,148.1 L490.0,147.4 L488.5,147.7 L487.0,149.7 L485.5,147.6 L484.0,147.7 L482.5,150.7 L481.0,153.1 L479.5,148.8 L478.0,147.8 L476.5,153.3 L475.0,154.9 L473.5,150.8 L472.0,152.2 L470.5,150.5 L469.0,148.9 L467.5,149.2 L466.0,151.2 L464.5,151.1 L463.0,148.0 L461.5,148.7 L460.0,148.6 L458.5,151.5 L457.0,150.0 L455.5,150.5 L454.0,150.4 L452.5,147.9 L451.0,147.8 L449.5,147.9 L448.0,149.6 L446.5,149.4 L445.0,148.9 L443.5,147.9 L442.0,149.7 L440.5,148.6 L439.0,148.6 L437.5,150.8 L436.0,151.8 L434.5,150.3 L433.0,150.3 L431.5,148.1 L430.0,149.3 L428.5,149.2 L427.0,149.8 L425.5,154.4 L424.0,151.7 L422.5,153.7 L421.0,151.7 L419.5,151.7 L418.0,149.3 L416.5,148.8 L415.0,149.2 L413.5,149.7 L412.0,151.4 L410.5,153.0 L409.0,152.1 L407.5,149.6 L406.0,148.8 L404.5,148.4 L403.0,148.6 L401.5,151.5 L400.0,154.0 L398.5,154.4 L397.0,151.7 L395.5,150.0 L394.0,148.3 L392.5,150.5 L391.0,149.3 L389.5,149.1 L388.0,150.1 L386.5,149.3 L385.0,150.2 L383.5,150.6 L382.0,151.8 L380.5,152.8 L379.0,152.7 L377.5,149.7 L376.0,150.9 L374.5,151.7 L373.0,149.9 L371.5,150.3 L370.0,149.2 L368.5,155.9 L367.0,152.4 L365.5,150.1 L364.0,149.1 L362.5,150.8 L361.0,150.6 L359.5,150.5 L358.0,151.5 L356.5,156.7 L355.0,154.0 L353.5,151.8 L352.0,152.8 L350.5,152.7 L349.0,151.1 L347.5,154.0 L346.0,156.3 L344.5,159.1 L343.0,154.5 L341.5,150.0 L340.0,150.8 L338.5,149.3 L337.0,149.3 L335.5,151.9 L334.0,151.5 L332.5,151.0 L331.0,150.1 L329.5,151.4 L328.0,152.1 L326.5,154.6 L325.0,156.3 L323.5,156.0 L322.0,155.6 L320.5,152.8 L319.0,151.6 L317.5,151.5 L316.0,149.6 L314.5,152.0 L313.0,151.4 L311.5,150.9 L310.0,149.8 L308.5,151.1 L307.0,151.3 L305.5,150.8 L304.0,151.7 L302.5,152.1 L301.0,151.4 L299.5,153.4 L298.0,151.5 L296.5,151.7 L295.0,151.8 L293.5,158.5 L292.0,155.1 L290.5,151.1 L289.0,149.7 L287.5,152.3 L286.0,152.1 L284.5,150.8 L283.0,151.3 L281.5,152.4 L280.0,152.3 L278.5,150.2 L277.0,151.3 L275.5,151.3 L274.0,152.3 L272.5,153.5 L271.0,153.5 L269.5,150.8 L268.0,150.3 L266.5,160.9 L265.0,155.1 L263.5,150.7 L262.0,150.0 L260.5,153.3 L259.0,153.4 L257.5,151.9 L256.0,151.7 L254.5,153.0 L253.0,151.9 L251.5,153.3 L250.0,152.4 L248.5,153.1 L247.0,150.1 L245.5,151.6 L244.0,150.5 L242.5,152.5 L241.0,153.4 L239.5,157.8 L238.0,159.6 L236.5,156.2 L235.0,152.7 L233.5,151.8 L232.0,152.2 L230.5,152.2 L229.0,151.4 L227.5,150.6 L226.0,152.2 L224.5,150.7 L223.0,153.7 L221.5,159.9 L220.0,156.0 L218.5,152.0 L217.0,151.7 L215.5,150.9 L214.0,151.4 L212.5,152.4 L211.0,151.8 L209.5,151.0 L208.0,152.2 L206.5,151.2 L205.0,152.6 L203.5,151.9 L202.0,151.4 L200.5,150.8 L199.0,155.2 L197.5,156.2 L196,154.7 Z" fill="#00ff00" shape-rendering="crispEdges"/><rect x="195.5" y="118.5" width="1482" height="40" fill="none" stroke="#fff" stroke-width="1"/><rect x="322" y="119" width="3" height="39" fill="#c9b400"/><line x1="1678.5" y1="118" x2="1678.5" y2="159" stroke="#a00000" stroke-width="1"/><text x="196" y="155" font-size="9.5" fill="#fff" font-family="Liberation Sans" opacity="0.85" textLength="71" lengthAdjust="spacingAndGlyphs">31/10/2021 - 14:42:50</text><text x="1608" y="155" font-size="9.5" fill="#fff" font-family="Liberation Sans" textLength="70" lengthAdjust="spacingAndGlyphs">31/10/2021 - 14:45:07</text><circle cx="1699" cy="138" r="9.5" fill="none" stroke="#aaa" stroke-width="1.8"/><path d="M1699,131 v7.5 h5" fill="none" stroke="#aaa" stroke-width="1.6"/></svg>
<div class="t" style="left:658px;top:176px;width:160px;text-align:center;font-size:13.5px;font-weight:bold;color:#eee;line-height:16px">Vélocité<br>mm/s</div>
<div class="t" style="left:816px;top:176px;width:160px;text-align:center;font-size:13.5px;font-weight:bold;color:#eee;line-height:16px">Accélération<br>G</div>
<div class="t" style="left:974px;top:176px;width:160px;text-align:center;font-size:13.5px;font-weight:bold;color:#eee;line-height:16px">Roulements<br>G-Env</div>
<div class="t" style="left:1199px;top:182px;width:160px;text-align:center;font-size:13.5px;font-weight:bold;color:#eee;line-height:16px">VITESSE<br>Trs / mn</div>
<div class="a" style="left:659px;top:222px;width:159px;height:101px;background:#000;border:1px solid #c8c8c8"></div>
<div class="a" style="left:663px;top:247px;width:150px;height:1px;background:#c8c8c8"></div>
<div class="t" style="left:663px;top:227px;font-size:16px;color:#00ff99;letter-spacing:-0.4px">AI 1/v (mm/s)</div>
<div class="t" style="left:759px;top:226px;width:52px;text-align:right;font-size:13px;color:#c8c8c8">RMS</div>
<svg class="a" style="left:659px;top:274px" width="158" height="20"><g fill="none" stroke="#00e600" stroke-width="1.75"><g transform="translate(103.7,0)"><path d="M11.1,1.9 C10,0.9 8.2,0.6 6.8,0.8 C3,1.3 1,5.5 1,10.6 C1,15.3 3.3,17.1 6.6,17.1 C9.7,17.1 11.5,15 11.5,12.3 C11.5,9.4 9.5,7.4 6.6,7.4 C4,7.4 2,9 1.2,11"/></g><circle cx="126.5" cy="16" r="2.3" fill="#00e600" stroke="none"/><g transform="translate(137.3,0)"><path d="M1.2,3.6 V1.2 H10.9 L5.4,17.2"/></g></g></svg>
<div class="a" style="left:817px;top:222px;width:159px;height:101px;background:#000;border:1px solid #c8c8c8"></div>
<div class="a" style="left:821px;top:247px;width:150px;height:1px;background:#c8c8c8"></div>
<div class="t" style="left:821px;top:227px;font-size:16px;color:#00e600;letter-spacing:-0.4px">AI 1 (g)</div>
<div class="t" style="left:917px;top:226px;width:52px;text-align:right;font-size:13px;color:#c8c8c8">RMS</div>
<svg class="a" style="left:817px;top:274px" width="158" height="20"><g fill="none" stroke="#00e600" stroke-width="1.75"><g transform="translate(103.7,0)"><ellipse cx="6" cy="9" rx="4.85" ry="8.1"/></g><circle cx="126.5" cy="16" r="2.3" fill="#00e600" stroke="none"/><g transform="translate(137.3,0)"><path d="M1,4.2 C1.8,2 3.8,0.9 6.2,0.9 C9.2,0.9 11.2,2.8 11.2,5.3 C11.2,7.8 9.5,9.5 6.5,12 L0.9,17.1 H11.3 V15.2"/></g></g></svg>
<div class="a" style="left:975px;top:222px;width:159px;height:101px;background:#000;border:1px solid #c8c8c8"></div>
<div class="a" style="left:979px;top:247px;width:150px;height:1px;background:#c8c8c8"></div>
<div class="t" style="left:979px;top:227px;font-size:16px;color:#00ff99;letter-spacing:-0.4px">AI 1/Envelope (g)</div>
<div class="a" style="left:1114px;top:225px;width:16px;height:20px;overflow:hidden"><div class="t" style="left:1px;top:2px;font-size:13px;color:#c8c8c8">RMS</div></div>
<svg class="a" style="left:975px;top:274px" width="158" height="20"><g fill="none" stroke="#00e600" stroke-width="1.75"><g transform="translate(103.7,0)"><ellipse cx="6" cy="9" rx="4.85" ry="8.1"/></g><circle cx="126.5" cy="16" r="2.3" fill="#00e600" stroke="none"/><g transform="translate(137.3,0)"><path d="M1.2,3.2 L5.9,0.9 V17.1 M0.6,17.1 H11.4"/></g></g></svg>
<div class="a" style="left:659px;top:323px;width:474px;height:307px;background:#000"></div>
<div class="a" style="left:659px;top:631px;width:159px;height:101px;background:#000;border:1px solid #c8c8c8"></div>
<div class="a" style="left:663px;top:656px;width:150px;height:1px;background:#c8c8c8"></div>
<div class="t" style="left:663px;top:636px;font-size:16px;color:#0070ff;letter-spacing:-0.4px">AI 2/v (mm/s)</div>
<div class="t" style="left:759px;top:635px;width:52px;text-align:right;font-size:13px;color:#c8c8c8">RMS</div>
<svg class="a" style="left:659px;top:683px" width="158" height="20"><g fill="none" stroke="#0080ff" stroke-width="1.75"><g transform="translate(103.7,0)"><path d="M6,8.4 C3.3,8.4 1.7,6.8 1.7,4.6 C1.7,2.3 3.4,0.9 6,0.9 C8.6,0.9 10.3,2.3 10.3,4.6 C10.3,6.8 8.7,8.4 6,8.4 C2.9,8.4 1,10.2 1,12.8 C1,15.5 3,17.1 6,17.1 C9,17.1 11,15.5 11,12.8 C11,10.2 9.1,8.4 6,8.4 Z"/></g><circle cx="126.5" cy="16" r="2.3" fill="#0080ff" stroke="none"/><g transform="translate(137.3,0)"><path d="M1.6,2.6 C2.8,1.4 4.5,0.9 6.3,0.9 C9,0.9 10.7,2.4 10.7,4.6 C10.7,6.9 9,8.4 5.6,8.4 C9.4,8.4 11.4,10.2 11.4,12.8 C11.4,15.6 9.2,17.1 6.3,17.1 C4,17.1 2,16.5 0.8,15.2"/></g></g></svg>
<div class="a" style="left:817px;top:631px;width:159px;height:101px;background:#000;border:1px solid #c8c8c8"></div>
<div class="a" style="left:821px;top:656px;width:150px;height:1px;background:#c8c8c8"></div>
<div class="t" style="left:821px;top:636px;font-size:16px;color:#00ffff;letter-spacing:-0.4px">AI 2 (g)</div>
<div class="t" style="left:917px;top:635px;width:52px;text-align:right;font-size:13px;color:#c8c8c8">RMS</div>
<svg class="a" style="left:817px;top:683px" width="158" height="20"><g fill="none" stroke="#0080ff" stroke-width="1.75"><g transform="translate(103.7,0)"><ellipse cx="6" cy="9" rx="4.85" ry="8.1"/></g><circle cx="126.5" cy="16" r="2.3" fill="#0080ff" stroke="none"/><g transform="translate(137.3,0)"><path d="M1,4.2 C1.8,2 3.8,0.9 6.2,0.9 C9.2,0.9 11.2,2.8 11.2,5.3 C11.2,7.8 9.5,9.5 6.5,12 L0.9,17.1 H11.3 V15.2"/></g></g></svg>
<div class="a" style="left:975px;top:631px;width:159px;height:101px;background:#000;border:1px solid #c8c8c8"></div>
<div class="a" style="left:979px;top:656px;width:150px;height:1px;background:#c8c8c8"></div>
<div class="t" style="left:979px;top:636px;font-size:16px;color:#0070ff;letter-spacing:-0.4px">AI 2/Envelope (g)</div>
<div class="a" style="left:1114px;top:634px;width:16px;height:20px;overflow:hidden"><div class="t" style="left:1px;top:2px;font-size:13px;color:#c8c8c8">RMS</div></div>
<svg class="a" style="left:975px;top:683px" width="158" height="20"><g fill="none" stroke="#0080ff" stroke-width="1.75"><g transform="translate(103.7,0)"><ellipse cx="6" cy="9" rx="4.85" ry="8.1"/></g><circle cx="126.5" cy="16" r="2.3" fill="#0080ff" stroke="none"/><g transform="translate(137.3,0)"><path d="M1,4.2 C1.8,2 3.8,0.9 6.2,0.9 C9.2,0.9 11.2,2.8 11.2,5.3 C11.2,7.8 9.5,9.5 6.5,12 L0.9,17.1 H11.3 V15.2"/></g></g></svg>
<div class="a" style="left:659px;top:732px;width:474px;height:307px;background:#000"></div>
<div class="a" style="left:659px;top:323px;width:474px;height:308px;background:#000"></div>
<div class="a" style="left:816px;top:222px;width:1px;height:101px;background:#c8c8c8"></div>
<div class="a" style="left:974px;top:222px;width:1px;height:101px;background:#c8c8c8"></div>
<div class="a" style="left:816px;top:631px;width:1px;height:101px;background:#c8c8c8"></div>
<div class="a" style="left:974px;top:631px;width:1px;height:101px;background:#c8c8c8"></div>
<div class="a" style="left:659px;top:732px;width:474px;height:308px;background:#000"></div>
<svg class="a" style="left:0;top:0" width="1140" height="1040"><rect x="659" y="333.00" width="110" height="11" fill="#333333"/><path d="M659.5,344.00 V333.50 H769" fill="none" stroke="#c8c8c8" stroke-width="1"/><rect x="659" y="347.63" width="110" height="11" fill="#333333"/><path d="M659.5,358.63 V348.13 H769" fill="none" stroke="#c8c8c8" stroke-width="1"/><rect x="659" y="362.26" width="110" height="11" fill="#333333"/><path d="M659.5,373.26 V362.76 H769" fill="none" stroke="#c8c8c8" stroke-width="1"/><rect x="659" y="376.89" width="110" height="11" fill="#333333"/><path d="M659.5,387.89 V377.39 H769" fill="none" stroke="#c8c8c8" stroke-width="1"/><rect x="659" y="391.52" width="110" height="11" fill="#333333"/><path d="M659.5,402.52 V392.02 H769" fill="none" stroke="#c8c8c8" stroke-width="1"/><rect x="659" y="406.15" width="110" height="11" fill="#333333"/><path d="M659.5,417.15 V406.65 H769" fill="none" stroke="#c8c8c8" stroke-width="1"/><rect x="659" y="420.78" width="110" height="11" fill="#333333"/><path d="M659.5,431.78 V421.28 H769" fill="none" stroke="#c8c8c8" stroke-width="1"/><rect x="659" y="435.41" width="110" height="11" fill="#00ff00"/><path d="M659.5,446.41 V435.91 H769" fill="none" stroke="#c8c8c8" stroke-width="1"/><rect x="659" y="450.04" width="110" height="11" fill="#00ff00"/><path d="M659.5,461.04 V450.54 H769" fill="none" stroke="#c8c8c8" stroke-width="1"/><rect x="659" y="464.67" width="110" height="11" fill="#00ff00"/><path d="M659.5,475.67 V465.17 H769" fill="none" stroke="#c8c8c8" stroke-width="1"/><rect x="659" y="479.30" width="110" height="11" fill="#00ff00"/><path d="M659.5,490.30 V479.80 H769" fill="none" stroke="#c8c8c8" stroke-width="1"/><rect x="659" y="493.93" width="110" height="11" fill="#00ff00"/><path d="M659.5,504.93 V494.43 H769" fill="none" stroke="#c8c8c8" stroke-width="1"/><rect x="659" y="508.56" width="110" height="11" fill="#00ff00"/><path d="M659.5,519.56 V509.06 H769" fill="none" stroke="#c8c8c8" stroke-width="1"/><rect x="659" y="523.19" width="110" height="11" fill="#00ff00"/><path d="M659.5,534.19 V523.69 H769" fill="none" stroke="#c8c8c8" stroke-width="1"/><rect x="659" y="537.82" width="110" height="11" fill="#00ff00"/><path d="M659.5,548.82 V538.32 H769" fill="none" stroke="#c8c8c8" stroke-width="1"/><rect x="659" y="552.45" width="110" height="11" fill="#00ff00"/><path d="M659.5,563.45 V552.95 H769" fill="none" stroke="#c8c8c8" stroke-width="1"/><rect x="659" y="567.08" width="110" height="11" fill="#00ff00"/><path d="M659.5,578.08 V567.58 H769" fill="none" stroke="#c8c8c8" stroke-width="1"/><rect x="659" y="581.71" width="110" height="11" fill="#00ff00"/><path d="M659.5,592.71 V582.21 H769" fill="none" stroke="#c8c8c8" stroke-width="1"/><rect x="659" y="596.34" width="110" height="11" fill="#00ff00"/><path d="M659.5,607.34 V596.84 H769" fill="none" stroke="#c8c8c8" stroke-width="1"/><rect x="659" y="610.97" width="110" height="11" fill="#00ff00"/><path d="M659.5,621.97 V611.47 H769" fill="none" stroke="#c8c8c8" stroke-width="1"/><rect x="770" y="594.07" width="10" height="29.20" fill="#ff0000"/><rect x="770" y="623.27" width="10" height="0.00" fill=""/><rect x="770" y="418.87" width="10" height="175.20" fill="#00ff00"/><rect x="770" y="331.27" width="10" height="87.60" fill="#ff0000"/><path d="M770.5,331.3 V623.3" stroke="#c8c8c8" stroke-width="1"/><path d="M770,623.3 h10" stroke="#c8c8c8" stroke-width="1"/><path d="M770,616.0 h4" stroke="#c8c8c8" stroke-width="1"/><path d="M770,608.7 h4" stroke="#c8c8c8" stroke-width="1"/><path d="M770,601.4 h4" stroke="#c8c8c8" stroke-width="1"/><path d="M770,594.1 h4" stroke="#c8c8c8" stroke-width="1"/><path d="M770,586.8 h4" stroke="#c8c8c8" stroke-width="1"/><path d="M770,579.5 h4" stroke="#c8c8c8" stroke-width="1"/><path d="M770,572.2 h4" stroke="#c8c8c8" stroke-width="1"/><path d="M770,564.9 h4" stroke="#c8c8c8" stroke-width="1"/><path d="M770,557.6 h4" stroke="#c8c8c8" stroke-width="1"/><path d="M770,550.3 h10" stroke="#c8c8c8" stroke-width="1"/><path d="M770,543.0 h4" stroke="#c8c8c8" stroke-width="1"/><path d="M770,535.7 h4" stroke="#c8c8c8" stroke-width="1"/><path d="M770,528.4 h4" stroke="#c8c8c8" stroke-width="1"/><path d="M770,521.1 h4" stroke="#c8c8c8" stroke-width="1"/><path d="M770,513.8 h4" stroke="#c8c8c8" stroke-width="1"/><path d="M770,506.5 h4" stroke="#c8c8c8" stroke-width="1"/><path d="M770,499.2 h4" stroke="#c8c8c8" stroke-width="1"/><path d="M770,491.9 h4" stroke="#c8c8c8" stroke-width="1"/><path d="M770,484.6 h4" stroke="#c8c8c8" stroke-width="1"/><path d="M770,477.3 h10" stroke="#c8c8c8" stroke-width="1"/><path d="M770,470.0 h4" stroke="#c8c8c8" stroke-width="1"/><path d="M770,462.7 h4" stroke="#c8c8c8" stroke-width="1"/><path d="M770,455.4 h4" stroke="#c8c8c8" stroke-width="1"/><path d="M770,448.1 h4" stroke="#c8c8c8" stroke-width="1"/><path d="M770,440.8 h4" stroke="#c8c8c8" stroke-width="1"/><path d="M770,433.5 h4" stroke="#c8c8c8" stroke-width="1"/><path d="M770,426.2 h4" stroke="#c8c8c8" stroke-width="1"/><path d="M770,418.9 h4" stroke="#c8c8c8" stroke-width="1"/><path d="M770,411.6 h4" stroke="#c8c8c8" stroke-width="1"/><path d="M770,404.3 h10" stroke="#c8c8c8" stroke-width="1"/><path d="M770,397.0 h4" stroke="#c8c8c8" stroke-width="1"/><path d="M770,389.7 h4" stroke="#c8c8c8" stroke-width="1"/><path d="M770,382.4 h4" stroke="#c8c8c8" stroke-width="1"/><path d="M770,375.1 h4" stroke="#c8c8c8" stroke-width="1"/><path d="M770,367.8 h4" stroke="#c8c8c8" stroke-width="1"/><path d="M770,360.5 h4" stroke="#c8c8c8" stroke-width="1"/><path d="M770,353.2 h4" stroke="#c8c8c8" stroke-width="1"/><path d="M770,345.9 h4" stroke="#c8c8c8" stroke-width="1"/><path d="M770,338.6 h4" stroke="#c8c8c8" stroke-width="1"/><path d="M770,331.3 h10" stroke="#c8c8c8" stroke-width="1"/><text transform="translate(795,622.8) rotate(-90)" font-size="15" fill="#c8c8c8" font-family="Liberation Sans" text-anchor="start">0.0</text><text transform="translate(795,550.3) rotate(-90)" font-size="15" fill="#c8c8c8" font-family="Liberation Sans" text-anchor="middle">2.5</text><text transform="translate(795,477.3) rotate(-90)" font-size="15" fill="#c8c8c8" font-family="Liberation Sans" text-anchor="middle">5.0</text><text transform="translate(795,404.3) rotate(-90)" font-size="15" fill="#c8c8c8" font-family="Liberation Sans" text-anchor="middle">7.5</text><text transform="translate(795,332.8) rotate(-90)" font-size="15" fill="#c8c8c8" font-family="Liberation Sans" text-anchor="end">10.0</text><text transform="translate(811,326.3) rotate(-90)" font-size="14" fill="#c8c8c8" font-family="Liberation Sans" text-anchor="end">RMS</text><text transform="translate(811,494.8) rotate(-90)" font-size="16" letter-spacing="-0.45" fill="#00ff99" font-family="Liberation Sans" text-anchor="middle">AI 1/v <tspan fill="#c8c8c8">(mm/s)</tspan></text><rect x="817" y="333.00" width="110" height="11" fill="#333333"/><path d="M817.5,344.00 V333.50 H927" fill="none" stroke="#c8c8c8" stroke-width="1"/><rect x="817" y="347.63" width="110" height="11" fill="#333333"/><path d="M817.5,358.63 V348.13 H927" fill="none" stroke="#c8c8c8" stroke-width="1"/><rect x="817" y="362.26" width="110" height="11" fill="#333333"/><path d="M817.5,373.26 V362.76 H927" fill="none" stroke="#c8c8c8" stroke-width="1"/><rect x="817" y="376.89" width="110" height="11" fill="#333333"/><path d="M817.5,387.89 V377.39 H927" fill="none" stroke="#c8c8c8" stroke-width="1"/><rect x="817" y="391.52" width="110" height="11" fill="#333333"/><path d="M817.5,402.52 V392.02 H927" fill="none" stroke="#c8c8c8" stroke-width="1"/><rect x="817" y="406.15" width="110" height="11" fill="#333333"/><path d="M817.5,417.15 V406.65 H927" fill="none" stroke="#c8c8c8" stroke-width="1"/><rect x="817" y="420.78" width="110" height="11" fill="#333333"/><path d="M817.5,431.78 V421.28 H927" fill="none" stroke="#c8c8c8" stroke-width="1"/><rect x="817" y="435.41" width="110" height="11" fill="#333333"/><path d="M817.5,446.41 V435.91 H927" fill="none" stroke="#c8c8c8" stroke-width="1"/><rect x="817" y="450.04" width="110" height="11" fill="#333333"/><path d="M817.5,461.04 V450.54 H927" fill="none" stroke="#c8c8c8" stroke-width="1"/><rect x="817" y="464.67" width="110" height="11" fill="#333333"/><path d="M817.5,475.67 V465.17 H927" fill="none" stroke="#c8c8c8" stroke-width="1"/><rect x="817" y="479.30" width="110" height="11" fill="#333333"/><path d="M817.5,490.30 V479.80 H927" fill="none" stroke="#c8c8c8" stroke-width="1"/><rect x="817" y="493.93" width="110" height="11" fill="#333333"/><path d="M817.5,504.93 V494.43 H927" fill="none" stroke="#c8c8c8" stroke-width="1"/><rect x="817" y="508.56" width="110" height="11" fill="#333333"/><path d="M817.5,519.56 V509.06 H927" fill="none" stroke="#c8c8c8" stroke-width="1"/><rect x="817" y="523.19" width="110" height="11" fill="#333333"/><path d="M817.5,534.19 V523.69 H927" fill="none" stroke="#c8c8c8" stroke-width="1"/><rect x="817" y="537.82" width="110" height="11" fill="#333333"/><path d="M817.5,548.82 V538.32 H927" fill="none" stroke="#c8c8c8" stroke-width="1"/><rect x="817" y="552.45" width="110" height="11" fill="#333333"/><path d="M817.5,563.45 V552.95 H927" fill="none" stroke="#c8c8c8" stroke-width="1"/><rect x="817" y="567.08" width="110" height="11" fill="#333333"/><path d="M817.5,578.08 V567.58 H927" fill="none" stroke="#c8c8c8" stroke-width="1"/><rect x="817" y="581.71" width="110" height="11" fill="#333333"/><path d="M817.5,592.71 V582.21 H927" fill="none" stroke="#c8c8c8" stroke-width="1"/><rect x="817" y="596.34" width="110" height="11" fill="#00ff00"/><path d="M817.5,607.34 V596.84 H927" fill="none" stroke="#c8c8c8" stroke-width="1"/><rect x="817" y="610.97" width="110" height="11" fill="#00ff00"/><path d="M817.5,621.97 V611.47 H927" fill="none" stroke="#c8c8c8" stroke-width="1"/><rect x="928" y="477.27" width="10" height="146.00" fill="#00ff00"/><rect x="928" y="331.27" width="10" height="146.00" fill="#ff0000"/><path d="M928.5,331.3 V623.3" stroke="#c8c8c8" stroke-width="1"/><path d="M928,623.3 h10" stroke="#c8c8c8" stroke-width="1"/><path d="M928,616.0 h4" stroke="#c8c8c8" stroke-width="1"/><path d="M928,608.7 h4" stroke="#c8c8c8" stroke-width="1"/><path d="M928,601.4 h4" stroke="#c8c8c8" stroke-width="1"/><path d="M928,594.1 h4" stroke="#c8c8c8" stroke-width="1"/><path d="M928,586.8 h4" stroke="#c8c8c8" stroke-width="1"/><path d="M928,579.5 h4" stroke="#c8c8c8" stroke-width="1"/><path d="M928,572.2 h4" stroke="#c8c8c8" stroke-width="1"/><path d="M928,564.9 h4" stroke="#c8c8c8" stroke-width="1"/><path d="M928,557.6 h4" stroke="#c8c8c8" stroke-width="1"/><path d="M928,550.3 h10" stroke="#c8c8c8" stroke-width="1"/><path d="M928,543.0 h4" stroke="#c8c8c8" stroke-width="1"/><path d="M928,535.7 h4" stroke="#c8c8c8" stroke-width="1"/><path d="M928,528.4 h4" stroke="#c8c8c8" stroke-width="1"/><path d="M928,521.1 h4" stroke="#c8c8c8" stroke-width="1"/><path d="M928,513.8 h4" stroke="#c8c8c8" stroke-width="1"/><path d="M928,506.5 h4" stroke="#c8c8c8" stroke-width="1"/><path d="M928,499.2 h4" stroke="#c8c8c8" stroke-width="1"/><path d="M928,491.9 h4" stroke="#c8c8c8" stroke-width="1"/><path d="M928,484.6 h4" stroke="#c8c8c8" stroke-width="1"/><path d="M928,477.3 h10" stroke="#c8c8c8" stroke-width="1"/><path d="M928,470.0 h4" stroke="#c8c8c8" stroke-width="1"/><path d="M928,462.7 h4" stroke="#c8c8c8" stroke-width="1"/><path d="M928,455.4 h4" stroke="#c8c8c8" stroke-width="1"/><path d="M928,448.1 h4" stroke="#c8c8c8" stroke-width="1"/><path d="M928,440.8 h4" stroke="#c8c8c8" stroke-width="1"/><path d="M928,433.5 h4" stroke="#c8c8c8" stroke-width="1"/><path d="M928,426.2 h4" stroke="#c8c8c8" stroke-width="1"/><path d="M928,418.9 h4" stroke="#c8c8c8" stroke-width="1"/><path d="M928,411.6 h4" stroke="#c8c8c8" stroke-width="1"/><path d="M928,404.3 h10" stroke="#c8c8c8" stroke-width="1"/><path d="M928,397.0 h4" stroke="#c8c8c8" stroke-width="1"/><path d="M928,389.7 h4" stroke="#c8c8c8" stroke-width="1"/><path d="M928,382.4 h4" stroke="#c8c8c8" stroke-width="1"/><path d="M928,375.1 h4" stroke="#c8c8c8" stroke-width="1"/><path d="M928,367.8 h4" stroke="#c8c8c8" stroke-width="1"/><path d="M928,360.5 h4" stroke="#c8c8c8" stroke-width="1"/><path d="M928,353.2 h4" stroke="#c8c8c8" stroke-width="1"/><path d="M928,345.9 h4" stroke="#c8c8c8" stroke-width="1"/><path d="M928,338.6 h4" stroke="#c8c8c8" stroke-width="1"/><path d="M928,331.3 h10" stroke="#c8c8c8" stroke-width="1"/><text transform="translate(953,622.8) rotate(-90)" font-size="15" fill="#c8c8c8" font-family="Liberation Sans" text-anchor="start">0.00</text><text transform="translate(953,550.3) rotate(-90)" font-size="15" fill="#c8c8c8" font-family="Liberation Sans" text-anchor="middle">0.50</text><text transform="translate(953,477.3) rotate(-90)" font-size="15" fill="#c8c8c8" font-family="Liberation Sans" text-anchor="middle">1.00</text><text transform="translate(953,404.3) rotate(-90)" font-size="15" fill="#c8c8c8" font-family="Liberation Sans" text-anchor="middle">1.50</text><text transform="translate(953,332.8) rotate(-90)" font-size="15" fill="#c8c8c8" font-family="Liberation Sans" text-anchor="end">2.00</text><text transform="translate(969,326.3) rotate(-90)" font-size="14" fill="#c8c8c8" font-family="Liberation Sans" text-anchor="end">RMS</text><text transform="translate(969,494.8) rotate(-90)" font-size="16" letter-spacing="-0.45" fill="#00e600" font-family="Liberation Sans" text-anchor="middle">AI 1 <tspan fill="#c8c8c8">(g)</tspan></text><rect x="975" y="333.00" width="110" height="11" fill="#333333"/><path d="M975.5,344.00 V333.50 H1085" fill="none" stroke="#c8c8c8" stroke-width="1"/><rect x="975" y="347.63" width="110" height="11" fill="#333333"/><path d="M975.5,358.63 V348.13 H1085" fill="none" stroke="#c8c8c8" stroke-width="1"/><rect x="975" y="362.26" width="110" height="11" fill="#333333"/><path d="M975.5,373.26 V362.76 H1085" fill="none" stroke="#c8c8c8" stroke-width="1"/><rect x="975" y="376.89" width="110" height="11" fill="#333333"/><path d="M975.5,387.89 V377.39 H1085" fill="none" stroke="#c8c8c8" stroke-width="1"/><rect x="975" y="391.52" width="110" height="11" fill="#333333"/><path d="M975.5,402.52 V392.02 H1085" fill="none" stroke="#c8c8c8" stroke-width="1"/><rect x="975" y="406.15" width="110" height="11" fill="#333333"/><path d="M975.5,417.15 V406.65 H1085" fill="none" stroke="#c8c8c8" stroke-width="1"/><rect x="975" y="420.78" width="110" height="11" fill="#333333"/><path d="M975.5,431.78 V421.28 H1085" fill="none" stroke="#c8c8c8" stroke-width="1"/><rect x="975" y="435.41" width="110" height="11" fill="#333333"/><path d="M975.5,446.41 V435.91 H1085" fill="none" stroke="#c8c8c8" stroke-width="1"/><rect x="975" y="450.04" width="110" height="11" fill="#333333"/><path d="M975.5,461.04 V450.54 H1085" fill="none" stroke="#c8c8c8" stroke-width="1"/><rect x="975" y="464.67" width="110" height="11" fill="#333333"/><path d="M975.5,475.67 V465.17 H1085" fill="none" stroke="#c8c8c8" stroke-width="1"/><rect x="975" y="479.30" width="110" height="11" fill="#333333"/><path d="M975.5,490.30 V479.80 H1085" fill="none" stroke="#c8c8c8" stroke-width="1"/><rect x="975" y="493.93" width="110" height="11" fill="#333333"/><path d="M975.5,504.93 V494.43 H1085" fill="none" stroke="#c8c8c8" stroke-width="1"/><rect x="975" y="508.56" width="110" height="11" fill="#333333"/><path d="M975.5,519.56 V509.06 H1085" fill="none" stroke="#c8c8c8" stroke-width="1"/><rect x="975" y="523.19" width="110" height="11" fill="#333333"/><path d="M975.5,534.19 V523.69 H1085" fill="none" stroke="#c8c8c8" stroke-width="1"/><rect x="975" y="537.82" width="110" height="11" fill="#333333"/><path d="M975.5,548.82 V538.32 H1085" fill="none" stroke="#c8c8c8" stroke-width="1"/><rect x="975" y="552.45" width="110" height="11" fill="#333333"/><path d="M975.5,563.45 V552.95 H1085" fill="none" stroke="#c8c8c8" stroke-width="1"/><rect x="975" y="567.08" width="110" height="11" fill="#333333"/><path d="M975.5,578.08 V567.58 H1085" fill="none" stroke="#c8c8c8" stroke-width="1"/><rect x="975" y="581.71" width="110" height="11" fill="#333333"/><path d="M975.5,592.71 V582.21 H1085" fill="none" stroke="#c8c8c8" stroke-width="1"/><rect x="975" y="596.34" width="110" height="11" fill="#00ff00"/><path d="M975.5,607.34 V596.84 H1085" fill="none" stroke="#c8c8c8" stroke-width="1"/><rect x="975" y="610.97" width="110" height="11" fill="#00ff00"/><path d="M975.5,621.97 V611.47 H1085" fill="none" stroke="#c8c8c8" stroke-width="1"/><path d="M1086.5,331.3 V623.3" stroke="#c8c8c8" stroke-width="1"/><path d="M1086,623.3 h10" stroke="#c8c8c8" stroke-width="1"/><path d="M1086,616.0 h4" stroke="#c8c8c8" stroke-width="1"/><path d="M1086,608.7 h4" stroke="#c8c8c8" stroke-width="1"/><path d="M1086,601.4 h4" stroke="#c8c8c8" stroke-width="1"/><path d="M1086,594.1 h4" stroke="#c8c8c8" stroke-width="1"/><path d="M1086,586.8 h4" stroke="#c8c8c8" stroke-width="1"/><path d="M1086,579.5 h4" stroke="#c8c8c8" stroke-width="1"/><path d="M1086,572.2 h4" stroke="#c8c8c8" stroke-width="1"/><path d="M1086,564.9 h4" stroke="#c8c8c8" stroke-width="1"/><path d="M1086,557.6 h4" stroke="#c8c8c8" stroke-width="1"/><path d="M1086,550.3 h10" stroke="#c8c8c8" stroke-width="1"/><path d="M1086,543.0 h4" stroke="#c8c8c8" stroke-width="1"/><path d="M1086,535.7 h4" stroke="#c8c8c8" stroke-width="1"/><path d="M1086,528.4 h4" stroke="#c8c8c8" stroke-width="1"/><path d="M1086,521.1 h4" stroke="#c8c8c8" stroke-width="1"/><path d="M1086,513.8 h4" stroke="#c8c8c8" stroke-width="1"/><path d="M1086,506.5 h4" stroke="#c8c8c8" stroke-width="1"/><path d="M1086,499.2 h4" stroke="#c8c8c8" stroke-width="1"/><path d="M1086,491.9 h4" stroke="#c8c8c8" stroke-width="1"/><path d="M1086,484.6 h4" stroke="#c8c8c8" stroke-width="1"/><path d="M1086,477.3 h10" stroke="#c8c8c8" stroke-width="1"/><path d="M1086,470.0 h4" stroke="#c8c8c8" stroke-width="1"/><path d="M1086,462.7 h4" stroke="#c8c8c8" stroke-width="1"/><path d="M1086,455.4 h4" stroke="#c8c8c8" stroke-width="1"/><path d="M1086,448.1 h4" stroke="#c8c8c8" stroke-width="1"/><path d="M1086,440.8 h4" stroke="#c8c8c8" stroke-width="1"/><path d="M1086,433.5 h4" stroke="#c8c8c8" stroke-width="1"/><path d="M1086,426.2 h4" stroke="#c8c8c8" stroke-width="1"/><path d="M1086,418.9 h4" stroke="#c8c8c8" stroke-width="1"/><path d="M1086,411.6 h4" stroke="#c8c8c8" stroke-width="1"/><path d="M1086,404.3 h10" stroke="#c8c8c8" stroke-width="1"/><path d="M1086,397.0 h4" stroke="#c8c8c8" stroke-width="1"/><path d="M1086,389.7 h4" stroke="#c8c8c8" stroke-width="1"/><path d="M1086,382.4 h4" stroke="#c8c8c8" stroke-width="1"/><path d="M1086,375.1 h4" stroke="#c8c8c8" stroke-width="1"/><path d="M1086,367.8 h4" stroke="#c8c8c8" stroke-width="1"/><path d="M1086,360.5 h4" stroke="#c8c8c8" stroke-width="1"/><path d="M1086,353.2 h4" stroke="#c8c8c8" stroke-width="1"/><path d="M1086,345.9 h4" stroke="#c8c8c8" stroke-width="1"/><path d="M1086,338.6 h4" stroke="#c8c8c8" stroke-width="1"/><path d="M1086,331.3 h10" stroke="#c8c8c8" stroke-width="1"/><text transform="translate(1111,622.8) rotate(-90)" font-size="15" fill="#c8c8c8" font-family="Liberation Sans" text-anchor="start">0.00</text><text transform="translate(1111,550.3) rotate(-90)" font-size="15" fill="#c8c8c8" font-family="Liberation Sans" text-anchor="middle">0.25</text><text transform="translate(1111,477.3) rotate(-90)" font-size="15" fill="#c8c8c8" font-family="Liberation Sans" text-anchor="middle">0.50</text><text transform="translate(1111,404.3) rotate(-90)" font-size="15" fill="#c8c8c8" font-family="Liberation Sans" text-anchor="middle">0.75</text><text transform="translate(1111,332.8) rotate(-90)" font-size="15" fill="#c8c8c8" font-family="Liberation Sans" text-anchor="end">1.00</text><text transform="translate(1127,326.3) rotate(-90)" font-size="14" fill="#c8c8c8" font-family="Liberation Sans" text-anchor="end">RMS</text><text transform="translate(1127,494.8) rotate(-90)" font-size="16" letter-spacing="0" fill="#00ff99" font-family="Liberation Sans" text-anchor="middle">AI 1/Envelope<tspan fill="#c8c8c8">(g)</tspan></text><rect x="659" y="742.00" width="110" height="11" fill="#333333"/><path d="M659.5,753.00 V742.50 H769" fill="none" stroke="#c8c8c8" stroke-width="1"/><rect x="659" y="756.63" width="110" height="11" fill="#333333"/><path d="M659.5,767.63 V757.13 H769" fill="none" stroke="#c8c8c8" stroke-width="1"/><rect x="659" y="771.26" width="110" height="11" fill="#ff0000"/><path d="M659.5,782.26 V771.76 H769" fill="none" stroke="#c8c8c8" stroke-width="1"/><rect x="659" y="785.89" width="110" height="11" fill="#ff0000"/><path d="M659.5,796.89 V786.39 H769" fill="none" stroke="#c8c8c8" stroke-width="1"/><rect x="659" y="800.52" width="110" height="11" fill="#ff0000"/><path d="M659.5,811.52 V801.02 H769" fill="none" stroke="#c8c8c8" stroke-width="1"/><rect x="659" y="815.15" width="110" height="11" fill="#ff0000"/><path d="M659.5,826.15 V815.65 H769" fill="none" stroke="#c8c8c8" stroke-width="1"/><rect x="659" y="829.78" width="110" height="11" fill="#ff0000"/><path d="M659.5,840.78 V830.28 H769" fill="none" stroke="#c8c8c8" stroke-width="1"/><rect x="659" y="844.41" width="110" height="11" fill="#ff0000"/><path d="M659.5,855.41 V844.91 H769" fill="none" stroke="#c8c8c8" stroke-width="1"/><rect x="659" y="859.04" width="110" height="11" fill="#ff0000"/><path d="M659.5,870.04 V859.54 H769" fill="none" stroke="#c8c8c8" stroke-width="1"/><rect x="659" y="873.67" width="110" height="11" fill="#ff0000"/><path d="M659.5,884.67 V874.17 H769" fill="none" stroke="#c8c8c8" stroke-width="1"/><rect x="659" y="888.30" width="110" height="11" fill="#ff0000"/><path d="M659.5,899.30 V888.80 H769" fill="none" stroke="#c8c8c8" stroke-width="1"/><rect x="659" y="902.93" width="110" height="11" fill="#ff0000"/><path d="M659.5,913.93 V903.43 H769" fill="none" stroke="#c8c8c8" stroke-width="1"/><rect x="659" y="917.56" width="110" height="11" fill="#ff0000"/><path d="M659.5,928.56 V918.06 H769" fill="none" stroke="#c8c8c8" stroke-width="1"/><rect x="659" y="932.19" width="110" height="11" fill="#ff0000"/><path d="M659.5,943.19 V932.69 H769" fill="none" stroke="#c8c8c8" stroke-width="1"/><rect x="659" y="946.82" width="110" height="11" fill="#ff0000"/><path d="M659.5,957.82 V947.32 H769" fill="none" stroke="#c8c8c8" stroke-width="1"/><rect x="659" y="961.45" width="110" height="11" fill="#ff0000"/><path d="M659.5,972.45 V961.95 H769" fill="none" stroke="#c8c8c8" stroke-width="1"/><rect x="659" y="976.08" width="110" height="11" fill="#ff0000"/><path d="M659.5,987.08 V976.58 H769" fill="none" stroke="#c8c8c8" stroke-width="1"/><rect x="659" y="990.71" width="110" height="11" fill="#ff0000"/><path d="M659.5,1001.71 V991.21 H769" fill="none" stroke="#c8c8c8" stroke-width="1"/><rect x="659" y="1005.34" width="110" height="11" fill="#ff0000"/><path d="M659.5,1016.34 V1005.84 H769" fill="none" stroke="#c8c8c8" stroke-width="1"/><rect x="659" y="1019.97" width="110" height="11" fill="#ff0000"/><path d="M659.5,1030.97 V1020.47 H769" fill="none" stroke="#c8c8c8" stroke-width="1"/><rect x="770" y="1003.07" width="10" height="29.20" fill="#ff0000"/><rect x="770" y="827.87" width="10" height="175.20" fill="#0080ff"/><rect x="770" y="740.27" width="10" height="87.60" fill="#ff0000"/><path d="M770.5,740.3 V1032.3" stroke="#c8c8c8" stroke-width="1"/><path d="M770,1032.3 h10" stroke="#c8c8c8" stroke-width="1"/><path d="M770,1025.0 h4" stroke="#c8c8c8" stroke-width="1"/><path d="M770,1017.7 h4" stroke="#c8c8c8" stroke-width="1"/><path d="M770,1010.4 h4" stroke="#c8c8c8" stroke-width="1"/><path d="M770,1003.1 h4" stroke="#c8c8c8" stroke-width="1"/><path d="M770,995.8 h4" stroke="#c8c8c8" stroke-width="1"/><path d="M770,988.5 h4" stroke="#c8c8c8" stroke-width="1"/><path d="M770,981.2 h4" stroke="#c8c8c8" stroke-width="1"/><path d="M770,973.9 h4" stroke="#c8c8c8" stroke-width="1"/><path d="M770,966.6 h4" stroke="#c8c8c8" stroke-width="1"/><path d="M770,959.3 h10" stroke="#c8c8c8" stroke-width="1"/><path d="M770,952.0 h4" stroke="#c8c8c8" stroke-width="1"/><path d="M770,944.7 h4" stroke="#c8c8c8" stroke-width="1"/><path d="M770,937.4 h4" stroke="#c8c8c8" stroke-width="1"/><path d="M770,930.1 h4" stroke="#c8c8c8" stroke-width="1"/><path d="M770,922.8 h4" stroke="#c8c8c8" stroke-width="1"/><path d="M770,915.5 h4" stroke="#c8c8c8" stroke-width="1"/><path d="M770,908.2 h4" stroke="#c8c8c8" stroke-width="1"/><path d="M770,900.9 h4" stroke="#c8c8c8" stroke-width="1"/><path d="M770,893.6 h4" stroke="#c8c8c8" stroke-width="1"/><path d="M770,886.3 h10" stroke="#c8c8c8" stroke-width="1"/><path d="M770,879.0 h4" stroke="#c8c8c8" stroke-width="1"/><path d="M770,871.7 h4" stroke="#c8c8c8" stroke-width="1"/><path d="M770,864.4 h4" stroke="#c8c8c8" stroke-width="1"/><path d="M770,857.1 h4" stroke="#c8c8c8" stroke-width="1"/><path d="M770,849.8 h4" stroke="#c8c8c8" stroke-width="1"/><path d="M770,842.5 h4" stroke="#c8c8c8" stroke-width="1"/><path d="M770,835.2 h4" stroke="#c8c8c8" stroke-width="1"/><path d="M770,827.9 h4" stroke="#c8c8c8" stroke-width="1"/><path d="M770,820.6 h4" stroke="#c8c8c8" stroke-width="1"/><path d="M770,813.3 h10" stroke="#c8c8c8" stroke-width="1"/><path d="M770,806.0 h4" stroke="#c8c8c8" stroke-width="1"/><path d="M770,798.7 h4" stroke="#c8c8c8" stroke-width="1"/><path d="M770,791.4 h4" stroke="#c8c8c8" stroke-width="1"/><path d="M770,784.1 h4" stroke="#c8c8c8" stroke-width="1"/><path d="M770,776.8 h4" stroke="#c8c8c8" stroke-width="1"/><path d="M770,769.5 h4" stroke="#c8c8c8" stroke-width="1"/><path d="M770,762.2 h4" stroke="#c8c8c8" stroke-width="1"/><path d="M770,754.9 h4" stroke="#c8c8c8" stroke-width="1"/><path d="M770,747.6 h4" stroke="#c8c8c8" stroke-width="1"/><path d="M770,740.3 h10" stroke="#c8c8c8" stroke-width="1"/><text transform="translate(795,1031.8) rotate(-90)" font-size="15" fill="#c8c8c8" font-family="Liberation Sans" text-anchor="start">0.0</text><text transform="translate(795,959.3) rotate(-90)" font-size="15" fill="#c8c8c8" font-family="Liberation Sans" text-anchor="middle">2.5</text><text transform="translate(795,886.3) rotate(-90)" font-size="15" fill="#c8c8c8" font-family="Liberation Sans" text-anchor="middle">5.0</text><text transform="translate(795,813.3) rotate(-90)" font-size="15" fill="#c8c8c8" font-family="Liberation Sans" text-anchor="middle">7.5</text><text transform="translate(795,741.8) rotate(-90)" font-size="15" fill="#c8c8c8" font-family="Liberation Sans" text-anchor="end">10.0</text><text transform="translate(811,735.3) rotate(-90)" font-size="14" fill="#c8c8c8" font-family="Liberation Sans" text-anchor="end">RMS</text><text transform="translate(811,903.8) rotate(-90)" font-size="16" letter-spacing="-0.45" fill="#0070ff" font-family="Liberation Sans" text-anchor="middle">AI 2/v <tspan fill="#c8c8c8">(mm/s)</tspan></text><rect x="817" y="742.00" width="110" height="11" fill="#333333"/><path d="M817.5,753.00 V742.50 H927" fill="none" stroke="#c8c8c8" stroke-width="1"/><rect x="817" y="756.63" width="110" height="11" fill="#333333"/><path d="M817.5,767.63 V757.13 H927" fill="none" stroke="#c8c8c8" stroke-width="1"/><rect x="817" y="771.26" width="110" height="11" fill="#333333"/><path d="M817.5,782.26 V771.76 H927" fill="none" stroke="#c8c8c8" stroke-width="1"/><rect x="817" y="785.89" width="110" height="11" fill="#333333"/><path d="M817.5,796.89 V786.39 H927" fill="none" stroke="#c8c8c8" stroke-width="1"/><rect x="817" y="800.52" width="110" height="11" fill="#333333"/><path d="M817.5,811.52 V801.02 H927" fill="none" stroke="#c8c8c8" stroke-width="1"/><rect x="817" y="815.15" width="110" height="11" fill="#333333"/><path d="M817.5,826.15 V815.65 H927" fill="none" stroke="#c8c8c8" stroke-width="1"/><rect x="817" y="829.78" width="110" height="11" fill="#333333"/><path d="M817.5,840.78 V830.28 H927" fill="none" stroke="#c8c8c8" stroke-width="1"/><rect x="817" y="844.41" width="110" height="11" fill="#333333"/><path d="M817.5,855.41 V844.91 H927" fill="none" stroke="#c8c8c8" stroke-width="1"/><rect x="817" y="859.04" width="110" height="11" fill="#333333"/><path d="M817.5,870.04 V859.54 H927" fill="none" stroke="#c8c8c8" stroke-width="1"/><rect x="817" y="873.67" width="110" height="11" fill="#333333"/><path d="M817.5,884.67 V874.17 H927" fill="none" stroke="#c8c8c8" stroke-width="1"/><rect x="817" y="888.30" width="110" height="11" fill="#333333"/><path d="M817.5,899.30 V888.80 H927" fill="none" stroke="#c8c8c8" stroke-width="1"/><rect x="817" y="902.93" width="110" height="11" fill="#333333"/><path d="M817.5,913.93 V903.43 H927" fill="none" stroke="#c8c8c8" stroke-width="1"/><rect x="817" y="917.56" width="110" height="11" fill="#333333"/><path d="M817.5,928.56 V918.06 H927" fill="none" stroke="#c8c8c8" stroke-width="1"/><rect x="817" y="932.19" width="110" height="11" fill="#333333"/><path d="M817.5,943.19 V932.69 H927" fill="none" stroke="#c8c8c8" stroke-width="1"/><rect x="817" y="946.82" width="110" height="11" fill="#333333"/><path d="M817.5,957.82 V947.32 H927" fill="none" stroke="#c8c8c8" stroke-width="1"/><rect x="817" y="961.45" width="110" height="11" fill="#333333"/><path d="M817.5,972.45 V961.95 H927" fill="none" stroke="#c8c8c8" stroke-width="1"/><rect x="817" y="976.08" width="110" height="11" fill="#333333"/><path d="M817.5,987.08 V976.58 H927" fill="none" stroke="#c8c8c8" stroke-width="1"/><rect x="817" y="990.71" width="110" height="11" fill="#0080ff"/><path d="M817.5,1001.71 V991.21 H927" fill="none" stroke="#c8c8c8" stroke-width="1"/><rect x="817" y="1005.34" width="110" height="11" fill="#0080ff"/><path d="M817.5,1016.34 V1005.84 H927" fill="none" stroke="#c8c8c8" stroke-width="1"/><rect x="817" y="1019.97" width="110" height="11" fill="#0080ff"/><path d="M817.5,1030.97 V1020.47 H927" fill="none" stroke="#c8c8c8" stroke-width="1"/><rect x="928" y="886.27" width="10" height="146.00" fill="#0080ff"/><rect x="928" y="740.27" width="10" height="146.00" fill="#ff0000"/><path d="M928.5,740.3 V1032.3" stroke="#c8c8c8" stroke-width="1"/><path d="M928,1032.3 h10" stroke="#c8c8c8" stroke-width="1"/><path d="M928,1025.0 h4" stroke="#c8c8c8" stroke-width="1"/><path d="M928,1017.7 h4" stroke="#c8c8c8" stroke-width="1"/><path d="M928,1010.4 h4" stroke="#c8c8c8" stroke-width="1"/><path d="M928,1003.1 h4" stroke="#c8c8c8" stroke-width="1"/><path d="M928,995.8 h4" stroke="#c8c8c8" stroke-width="1"/><path d="M928,988.5 h4" stroke="#c8c8c8" stroke-width="1"/><path d="M928,981.2 h4" stroke="#c8c8c8" stroke-width="1"/><path d="M928,973.9 h4" stroke="#c8c8c8" stroke-width="1"/><path d="M928,966.6 h4" stroke="#c8c8c8" stroke-width="1"/><path d="M928,959.3 h10" stroke="#c8c8c8" stroke-width="1"/><path d="M928,952.0 h4" stroke="#c8c8c8" stroke-width="1"/><path d="M928,944.7 h4" stroke="#c8c8c8" stroke-width="1"/><path d="M928,937.4 h4" stroke="#c8c8c8" stroke-width="1"/><path d="M928,930.1 h4" stroke="#c8c8c8" stroke-width="1"/><path d="M928,922.8 h4" stroke="#c8c8c8" stroke-width="1"/><path d="M928,915.5 h4" stroke="#c8c8c8" stroke-width="1"/><path d="M928,908.2 h4" stroke="#c8c8c8" stroke-width="1"/><path d="M928,900.9 h4" stroke="#c8c8c8" stroke-width="1"/><path d="M928,893.6 h4" stroke="#c8c8c8" stroke-width="1"/><path d="M928,886.3 h10" stroke="#c8c8c8" stroke-width="1"/><path d="M928,879.0 h4" stroke="#c8c8c8" stroke-width="1"/><path d="M928,871.7 h4" stroke="#c8c8c8" stroke-width="1"/><path d="M928,864.4 h4" stroke="#c8c8c8" stroke-width="1"/><path d="M928,857.1 h4" stroke="#c8c8c8" stroke-width="1"/><path d="M928,849.8 h4" stroke="#c8c8c8" stroke-width="1"/><path d="M928,842.5 h4" stroke="#c8c8c8" stroke-width="1"/><path d="M928,835.2 h4" stroke="#c8c8c8" stroke-width="1"/><path d="M928,827.9 h4" stroke="#c8c8c8" stroke-width="1"/><path d="M928,820.6 h4" stroke="#c8c8c8" stroke-width="1"/><path d="M928,813.3 h10" stroke="#c8c8c8" stroke-width="1"/><path d="M928,806.0 h4" stroke="#c8c8c8" stroke-width="1"/><path d="M928,798.7 h4" stroke="#c8c8c8" stroke-width="1"/><path d="M928,791.4 h4" stroke="#c8c8c8" stroke-width="1"/><path d="M928,784.1 h4" stroke="#c8c8c8" stroke-width="1"/><path d="M928,776.8 h4" stroke="#c8c8c8" stroke-width="1"/><path d="M928,769.5 h4" stroke="#c8c8c8" stroke-width="1"/><path d="M928,762.2 h4" stroke="#c8c8c8" stroke-width="1"/><path d="M928,754.9 h4" stroke="#c8c8c8" stroke-width="1"/><path d="M928,747.6 h4" stroke="#c8c8c8" stroke-width="1"/><path d="M928,740.3 h10" stroke="#c8c8c8" stroke-width="1"/><text transform="translate(953,1031.8) rotate(-90)" font-size="15" fill="#c8c8c8" font-family="Liberation Sans" text-anchor="start">0.00</text><text transform="translate(953,959.3) rotate(-90)" font-size="15" fill="#c8c8c8" font-family="Liberation Sans" text-anchor="middle">0.50</text><text transform="translate(953,886.3) rotate(-90)" font-size="15" fill="#c8c8c8" font-family="Liberation Sans" text-anchor="middle">1.00</text><text transform="translate(953,813.3) rotate(-90)" font-size="15" fill="#c8c8c8" font-family="Liberation Sans" text-anchor="middle">1.50</text><text transform="translate(953,741.8) rotate(-90)" font-size="15" fill="#c8c8c8" font-family="Liberation Sans" text-anchor="end">2.00</text><text transform="translate(969,735.3) rotate(-90)" font-size="14" fill="#c8c8c8" font-family="Liberation Sans" text-anchor="end">RMS</text><text transform="translate(969,903.8) rotate(-90)" font-size="16" letter-spacing="-0.45" fill="#00ffff" font-family="Liberation Sans" text-anchor="middle">AI 2 <tspan fill="#c8c8c8">(g)</tspan></text><rect x="975" y="742.00" width="110" height="11" fill="#333333"/><path d="M975.5,753.00 V742.50 H1085" fill="none" stroke="#c8c8c8" stroke-width="1"/><rect x="975" y="756.63" width="110" height="11" fill="#333333"/><path d="M975.5,767.63 V757.13 H1085" fill="none" stroke="#c8c8c8" stroke-width="1"/><rect x="975" y="771.26" width="110" height="11" fill="#333333"/><path d="M975.5,782.26 V771.76 H1085" fill="none" stroke="#c8c8c8" stroke-width="1"/><rect x="975" y="785.89" width="110" height="11" fill="#333333"/><path d="M975.5,796.89 V786.39 H1085" fill="none" stroke="#c8c8c8" stroke-width="1"/><rect x="975" y="800.52" width="110" height="11" fill="#333333"/><path d="M975.5,811.52 V801.02 H1085" fill="none" stroke="#c8c8c8" stroke-width="1"/><rect x="975" y="815.15" width="110" height="11" fill="#333333"/><path d="M975.5,826.15 V815.65 H1085" fill="none" stroke="#c8c8c8" stroke-width="1"/><rect x="975" y="829.78" width="110" height="11" fill="#333333"/><path d="M975.5,840.78 V830.28 H1085" fill="none" stroke="#c8c8c8" stroke-width="1"/><rect x="975" y="844.41" width="110" height="11" fill="#333333"/><path d="M975.5,855.41 V844.91 H1085" fill="none" stroke="#c8c8c8" stroke-width="1"/><rect x="975" y="859.04" width="110" height="11" fill="#333333"/><path d="M975.5,870.04 V859.54 H1085" fill="none" stroke="#c8c8c8" stroke-width="1"/><rect x="975" y="873.67" width="110" height="11" fill="#333333"/><path d="M975.5,884.67 V874.17 H1085" fill="none" stroke="#c8c8c8" stroke-width="1"/><rect x="975" y="888.30" width="110" height="11" fill="#333333"/><path d="M975.5,899.30 V888.80 H1085" fill="none" stroke="#c8c8c8" stroke-width="1"/><rect x="975" y="902.93" width="110" height="11" fill="#333333"/><path d="M975.5,913.93 V903.43 H1085" fill="none" stroke="#c8c8c8" stroke-width="1"/><rect x="975" y="917.56" width="110" height="11" fill="#333333"/><path d="M975.5,928.56 V918.06 H1085" fill="none" stroke="#c8c8c8" stroke-width="1"/><rect x="975" y="932.19" width="110" height="11" fill="#333333"/><path d="M975.5,943.19 V932.69 H1085" fill="none" stroke="#c8c8c8" stroke-width="1"/><rect x="975" y="946.82" width="110" height="11" fill="#333333"/><path d="M975.5,957.82 V947.32 H1085" fill="none" stroke="#c8c8c8" stroke-width="1"/><rect x="975" y="961.45" width="110" height="11" fill="#333333"/><path d="M975.5,972.45 V961.95 H1085" fill="none" stroke="#c8c8c8" stroke-width="1"/><rect x="975" y="976.08" width="110" height="11" fill="#333333"/><path d="M975.5,987.08 V976.58 H1085" fill="none" stroke="#c8c8c8" stroke-width="1"/><rect x="975" y="990.71" width="110" height="11" fill="#333333"/><path d="M975.5,1001.71 V991.21 H1085" fill="none" stroke="#c8c8c8" stroke-width="1"/><rect x="975" y="1005.34" width="110" height="11" fill="#0080ff"/><path d="M975.5,1016.34 V1005.84 H1085" fill="none" stroke="#c8c8c8" stroke-width="1"/><rect x="975" y="1019.97" width="110" height="11" fill="#0080ff"/><path d="M975.5,1030.97 V1020.47 H1085" fill="none" stroke="#c8c8c8" stroke-width="1"/><path d="M1086.5,740.3 V1032.3" stroke="#c8c8c8" stroke-width="1"/><path d="M1086,1032.3 h10" stroke="#c8c8c8" stroke-width="1"/><path d="M1086,1025.0 h4" stroke="#c8c8c8" stroke-width="1"/><path d="M1086,1017.7 h4" stroke="#c8c8c8" stroke-width="1"/><path d="M1086,1010.4 h4" stroke="#c8c8c8" stroke-width="1"/><path d="M1086,1003.1 h4" stroke="#c8c8c8" stroke-width="1"/><path d="M1086,995.8 h4" stroke="#c8c8c8" stroke-width="1"/><path d="M1086,988.5 h4" stroke="#c8c8c8" stroke-width="1"/><path d="M1086,981.2 h4" stroke="#c8c8c8" stroke-width="1"/><path d="M1086,973.9 h4" stroke="#c8c8c8" stroke-width="1"/><path d="M1086,966.6 h4" stroke="#c8c8c8" stroke-width="1"/><path d="M1086,959.3 h10" stroke="#c8c8c8" stroke-width="1"/><path d="M1086,952.0 h4" stroke="#c8c8c8" stroke-width="1"/><path d="M1086,944.7 h4" stroke="#c8c8c8" stroke-width="1"/><path d="M1086,937.4 h4" stroke="#c8c8c8" stroke-width="1"/><path d="M1086,930.1 h4" stroke="#c8c8c8" stroke-width="1"/><path d="M1086,922.8 h4" stroke="#c8c8c8" stroke-width="1"/><path d="M1086,915.5 h4" stroke="#c8c8c8" stroke-width="1"/><path d="M1086,908.2 h4" stroke="#c8c8c8" stroke-width="1"/><path d="M1086,900.9 h4" stroke="#c8c8c8" stroke-width="1"/><path d="M1086,893.6 h4" stroke="#c8c8c8" stroke-width="1"/><path d="M1086,886.3 h10" stroke="#c8c8c8" stroke-width="1"/><path d="M1086,879.0 h4" stroke="#c8c8c8" stroke-width="1"/><path d="M1086,871.7 h4" stroke="#c8c8c8" stroke-width="1"/><path d="M1086,864.4 h4" stroke="#c8c8c8" stroke-width="1"/><path d="M1086,857.1 h4" stroke="#c8c8c8" stroke-width="1"/><path d="M1086,849.8 h4" stroke="#c8c8c8" stroke-width="1"/><path d="M1086,842.5 h4" stroke="#c8c8c8" stroke-width="1"/><path d="M1086,835.2 h4" stroke="#c8c8c8" stroke-width="1"/><path d="M1086,827.9 h4" stroke="#c8c8c8" stroke-width="1"/><path d="M1086,820.6 h4" stroke="#c8c8c8" stroke-width="1"/><path d="M1086,813.3 h10" stroke="#c8c8c8" stroke-width="1"/><path d="M1086,806.0 h4" stroke="#c8c8c8" stroke-width="1"/><path d="M1086,798.7 h4" stroke="#c8c8c8" stroke-width="1"/><path d="M1086,791.4 h4" stroke="#c8c8c8" stroke-width="1"/><path d="M1086,784.1 h4" stroke="#c8c8c8" stroke-width="1"/><path d="M1086,776.8 h4" stroke="#c8c8c8" stroke-width="1"/><path d="M1086,769.5 h4" stroke="#c8c8c8" stroke-width="1"/><path d="M1086,762.2 h4" stroke="#c8c8c8" stroke-width="1"/><path d="M1086,754.9 h4" stroke="#c8c8c8" stroke-width="1"/><path d="M1086,747.6 h4" stroke="#c8c8c8" stroke-width="1"/><path d="M1086,740.3 h10" stroke="#c8c8c8" stroke-width="1"/><text transform="translate(1111,1031.8) rotate(-90)" font-size="15" fill="#c8c8c8" font-family="Liberation Sans" text-anchor="start">0.00</text><text transform="translate(1111,959.3) rotate(-90)" font-size="15" fill="#c8c8c8" font-family="Liberation Sans" text-anchor="middle">0.25</text><text transform="translate(1111,886.3) rotate(-90)" font-size="15" fill="#c8c8c8" font-family="Liberation Sans" text-anchor="middle">0.50</text><text transform="translate(1111,813.3) rotate(-90)" font-size="15" fill="#c8c8c8" font-family="Liberation Sans" text-anchor="middle">0.75</text><text transform="translate(1111,741.8) rotate(-90)" font-size="15" fill="#c8c8c8" font-family="Liberation Sans" text-anchor="end">1.00</text><text transform="translate(1127,735.3) rotate(-90)" font-size="14" fill="#c8c8c8" font-family="Liberation Sans" text-anchor="end">RMS</text><text transform="translate(1127,903.8) rotate(-90)" font-size="16" letter-spacing="0" fill="#00ff99" font-family="Liberation Sans" text-anchor="middle">AI 1/Envelope<tspan fill="#c8c8c8">(g)</tspan></text></svg>
<svg class="a" style="left:0;top:0" width="1720" height="1040"><path d="M1279,387 L1186.44,497.31 A144,144 0 1 1 1371.56,497.31 Z" fill="#000"/><path d="M1188.69,494.63 A140.5,140.5 0 1 1 1369.31,494.63" fill="none" stroke="#c4c4c4" stroke-width="7"/><line x1="1190.94" y1="491.95" x2="1198.65" y2="482.76" stroke="#c4c4c4" stroke-width="2.2"/><line x1="1184.70" y1="486.38" x2="1188.14" y2="482.75" stroke="#c4c4c4" stroke-width="1"/><line x1="1178.80" y1="480.43" x2="1182.46" y2="477.02" stroke="#c4c4c4" stroke-width="1"/><line x1="1173.29" y1="474.14" x2="1177.15" y2="470.96" stroke="#c4c4c4" stroke-width="1"/><line x1="1168.16" y1="467.53" x2="1172.21" y2="464.59" stroke="#c4c4c4" stroke-width="1"/><line x1="1163.46" y1="460.61" x2="1167.67" y2="457.92" stroke="#c4c4c4" stroke-width="1"/><line x1="1159.18" y1="453.42" x2="1163.55" y2="450.99" stroke="#c4c4c4" stroke-width="1"/><line x1="1155.35" y1="445.98" x2="1159.86" y2="443.83" stroke="#c4c4c4" stroke-width="1"/><line x1="1151.98" y1="438.32" x2="1156.61" y2="436.45" stroke="#c4c4c4" stroke-width="1"/><line x1="1149.08" y1="430.47" x2="1153.82" y2="428.88" stroke="#c4c4c4" stroke-width="1"/><line x1="1146.67" y1="422.46" x2="1158.26" y2="419.35" stroke="#c4c4c4" stroke-width="2.2"/><line x1="1144.75" y1="414.31" x2="1149.65" y2="413.32" stroke="#c4c4c4" stroke-width="1"/><line x1="1143.33" y1="406.07" x2="1148.28" y2="405.37" stroke="#c4c4c4" stroke-width="1"/><line x1="1142.42" y1="397.75" x2="1147.41" y2="397.36" stroke="#c4c4c4" stroke-width="1"/><line x1="1142.02" y1="389.39" x2="1147.02" y2="389.30" stroke="#c4c4c4" stroke-width="1"/><line x1="1142.13" y1="381.02" x2="1147.13" y2="381.24" stroke="#c4c4c4" stroke-width="1"/><line x1="1142.75" y1="372.68" x2="1147.72" y2="373.20" stroke="#c4c4c4" stroke-width="1"/><line x1="1143.88" y1="364.39" x2="1148.81" y2="365.21" stroke="#c4c4c4" stroke-width="1"/><line x1="1145.51" y1="356.18" x2="1150.38" y2="357.31" stroke="#c4c4c4" stroke-width="1"/><line x1="1147.64" y1="348.09" x2="1152.44" y2="349.51" stroke="#c4c4c4" stroke-width="1"/><line x1="1150.26" y1="340.14" x2="1161.54" y2="344.25" stroke="#c4c4c4" stroke-width="2.2"/><line x1="1153.36" y1="332.37" x2="1157.95" y2="334.37" stroke="#c4c4c4" stroke-width="1"/><line x1="1156.93" y1="324.80" x2="1161.39" y2="327.07" stroke="#c4c4c4" stroke-width="1"/><line x1="1160.96" y1="317.47" x2="1165.26" y2="320.00" stroke="#c4c4c4" stroke-width="1"/><line x1="1165.42" y1="310.39" x2="1169.57" y2="313.19" stroke="#c4c4c4" stroke-width="1"/><line x1="1170.31" y1="303.60" x2="1174.28" y2="306.64" stroke="#c4c4c4" stroke-width="1"/><line x1="1175.60" y1="297.12" x2="1179.38" y2="300.40" stroke="#c4c4c4" stroke-width="1"/><line x1="1181.28" y1="290.98" x2="1184.85" y2="294.48" stroke="#c4c4c4" stroke-width="1"/><line x1="1187.33" y1="285.19" x2="1190.67" y2="288.90" stroke="#c4c4c4" stroke-width="1"/><line x1="1193.72" y1="279.78" x2="1196.83" y2="283.70" stroke="#c4c4c4" stroke-width="1"/><line x1="1200.42" y1="274.78" x2="1207.30" y2="284.61" stroke="#c4c4c4" stroke-width="2.2"/><line x1="1207.42" y1="270.19" x2="1210.03" y2="274.45" stroke="#c4c4c4" stroke-width="1"/><line x1="1214.68" y1="266.04" x2="1217.03" y2="270.45" stroke="#c4c4c4" stroke-width="1"/><line x1="1222.19" y1="262.34" x2="1224.26" y2="266.89" stroke="#c4c4c4" stroke-width="1"/><line x1="1229.90" y1="259.10" x2="1231.70" y2="263.77" stroke="#c4c4c4" stroke-width="1"/><line x1="1237.80" y1="256.34" x2="1239.31" y2="261.11" stroke="#c4c4c4" stroke-width="1"/><line x1="1245.86" y1="254.07" x2="1247.07" y2="258.92" stroke="#c4c4c4" stroke-width="1"/><line x1="1254.03" y1="252.29" x2="1254.94" y2="257.21" stroke="#c4c4c4" stroke-width="1"/><line x1="1262.30" y1="251.02" x2="1262.91" y2="255.98" stroke="#c4c4c4" stroke-width="1"/><line x1="1270.64" y1="250.26" x2="1270.94" y2="255.25" stroke="#c4c4c4" stroke-width="1"/><line x1="1279.00" y1="250.00" x2="1279.00" y2="262.00" stroke="#c4c4c4" stroke-width="2.2"/><line x1="1287.36" y1="250.26" x2="1287.06" y2="255.25" stroke="#c4c4c4" stroke-width="1"/><line x1="1295.70" y1="251.02" x2="1295.09" y2="255.98" stroke="#c4c4c4" stroke-width="1"/><line x1="1303.97" y1="252.29" x2="1303.06" y2="257.21" stroke="#c4c4c4" stroke-width="1"/><line x1="1312.14" y1="254.07" x2="1310.93" y2="258.92" stroke="#c4c4c4" stroke-width="1"/><line x1="1320.20" y1="256.34" x2="1318.69" y2="261.11" stroke="#c4c4c4" stroke-width="1"/><line x1="1328.10" y1="259.10" x2="1326.30" y2="263.77" stroke="#c4c4c4" stroke-width="1"/><line x1="1335.81" y1="262.34" x2="1333.74" y2="266.89" stroke="#c4c4c4" stroke-width="1"/><line x1="1343.32" y1="266.04" x2="1340.97" y2="270.45" stroke="#c4c4c4" stroke-width="1"/><line x1="1350.58" y1="270.19" x2="1347.97" y2="274.45" stroke="#c4c4c4" stroke-width="1"/><line x1="1357.58" y1="274.78" x2="1350.70" y2="284.61" stroke="#c4c4c4" stroke-width="2.2"/><line x1="1364.28" y1="279.78" x2="1361.17" y2="283.70" stroke="#c4c4c4" stroke-width="1"/><line x1="1370.67" y1="285.19" x2="1367.33" y2="288.90" stroke="#c4c4c4" stroke-width="1"/><line x1="1376.72" y1="290.98" x2="1373.15" y2="294.48" stroke="#c4c4c4" stroke-width="1"/><line x1="1382.40" y1="297.12" x2="1378.62" y2="300.40" stroke="#c4c4c4" stroke-width="1"/><line x1="1387.69" y1="303.60" x2="1383.72" y2="306.64" stroke="#c4c4c4" stroke-width="1"/><line x1="1392.58" y1="310.39" x2="1388.43" y2="313.19" stroke="#c4c4c4" stroke-width="1"/><line x1="1397.04" y1="317.47" x2="1392.74" y2="320.00" stroke="#c4c4c4" stroke-width="1"/><line x1="1401.07" y1="324.80" x2="1396.61" y2="327.07" stroke="#c4c4c4" stroke-width="1"/><line x1="1404.64" y1="332.37" x2="1400.05" y2="334.37" stroke="#c4c4c4" stroke-width="1"/><line x1="1407.74" y1="340.14" x2="1396.46" y2="344.25" stroke="#c4c4c4" stroke-width="2.2"/><line x1="1410.36" y1="348.09" x2="1405.56" y2="349.51" stroke="#c4c4c4" stroke-width="1"/><line x1="1412.49" y1="356.18" x2="1407.62" y2="357.31" stroke="#c4c4c4" stroke-width="1"/><line x1="1414.12" y1="364.39" x2="1409.19" y2="365.21" stroke="#c4c4c4" stroke-width="1"/><line x1="1415.25" y1="372.68" x2="1410.28" y2="373.20" stroke="#c4c4c4" stroke-width="1"/><line x1="1415.87" y1="381.02" x2="1410.87" y2="381.24" stroke="#c4c4c4" stroke-width="1"/><line x1="1415.98" y1="389.39" x2="1410.98" y2="389.30" stroke="#c4c4c4" stroke-width="1"/><line x1="1415.58" y1="397.75" x2="1410.59" y2="397.36" stroke="#c4c4c4" stroke-width="1"/><line x1="1414.67" y1="406.07" x2="1409.72" y2="405.37" stroke="#c4c4c4" stroke-width="1"/><line x1="1413.25" y1="414.31" x2="1408.35" y2="413.32" stroke="#c4c4c4" stroke-width="1"/><line x1="1411.33" y1="422.46" x2="1399.74" y2="419.35" stroke="#c4c4c4" stroke-width="2.2"/><line x1="1408.92" y1="430.47" x2="1404.18" y2="428.88" stroke="#c4c4c4" stroke-width="1"/><line x1="1406.02" y1="438.32" x2="1401.39" y2="436.45" stroke="#c4c4c4" stroke-width="1"/><line x1="1402.65" y1="445.98" x2="1398.14" y2="443.83" stroke="#c4c4c4" stroke-width="1"/><line x1="1398.82" y1="453.42" x2="1394.45" y2="450.99" stroke="#c4c4c4" stroke-width="1"/><line x1="1394.54" y1="460.61" x2="1390.33" y2="457.92" stroke="#c4c4c4" stroke-width="1"/><line x1="1389.84" y1="467.53" x2="1385.79" y2="464.59" stroke="#c4c4c4" stroke-width="1"/><line x1="1384.71" y1="474.14" x2="1380.85" y2="470.96" stroke="#c4c4c4" stroke-width="1"/><line x1="1379.20" y1="480.43" x2="1375.54" y2="477.02" stroke="#c4c4c4" stroke-width="1"/><line x1="1373.30" y1="486.38" x2="1369.86" y2="482.75" stroke="#c4c4c4" stroke-width="1"/><line x1="1367.06" y1="491.95" x2="1359.35" y2="482.76" stroke="#c4c4c4" stroke-width="2.2"/><text x="1203" y="478" font-size="16" fill="#c8c8c8" font-family="Liberation Sans" text-anchor="middle">0</text><text x="1174" y="422" font-size="16" fill="#c8c8c8" font-family="Liberation Sans" text-anchor="middle">250</text><text x="1177" y="355.5" font-size="16" fill="#c8c8c8" font-family="Liberation Sans" text-anchor="middle">500</text><text x="1219" y="302" font-size="16" fill="#c8c8c8" font-family="Liberation Sans" text-anchor="middle">750</text><text x="1279" y="280" font-size="16" fill="#c8c8c8" font-family="Liberation Sans" text-anchor="middle">1000</text><text x="1336" y="302.5" font-size="16" fill="#c8c8c8" font-family="Liberation Sans" text-anchor="middle">1250</text><text x="1377" y="355.5" font-size="16" fill="#c8c8c8" font-family="Liberation Sans" text-anchor="middle">1500</text><text x="1379" y="422" font-size="16" fill="#c8c8c8" font-family="Liberation Sans" text-anchor="middle">1750</text><text x="1342" y="478" font-size="16" fill="#c8c8c8" font-family="Liberation Sans" text-anchor="middle">2000</text><text x="1279" y="304" font-size="14" fill="#c8c8c8" font-family="Liberation Sans" text-anchor="middle">AVE</text><text x="1279" y="322" font-size="15.5" letter-spacing="-0.2" fill="#e8104a" font-family="Liberation Sans" text-anchor="middle">AI 4/Frequency</text><text x="1279" y="340" font-size="15.5" fill="#e8104a" font-family="Liberation Sans" text-anchor="middle">(RPM)</text><polygon points="1275.60,383.33 1372.92,300.03 1282.40,390.67" fill="#ff0000"/><circle cx="1279" cy="387" r="7" fill="#ff0000"/></svg>
<div class="t" style="left:272px;top:439px;width:200px;text-align:center;font-size:20.3px;font-weight:bold;color:#fff">BANC FORMATION</div>
<div class="t" style="left:598px;top:433px;font-size:12.7px;font-weight:bold;color:#fff">VOIE 1</div>
<div class="t" style="left:598px;top:842px;font-size:12.7px;font-weight:bold;color:#fff">VOIE 2</div>
<div class="a" style="left:143px;top:882px;width:198px;height:22px;background:#2b3034"></div>
<div class="t" style="left:176px;top:887px;font-size:11.5px;color:#212325">Capture Plein écran</div>
<div class="a" style="left:143px;top:882px;width:42px;height:22px;background:#cdd1d9;overflow:hidden"><div class="t" style="left:33px;top:5px;font-size:11.5px;color:#b9bcc2">Capture Plein écran</div></div>
<svg class="a" style="left:185px;top:478px" width="376" height="284" viewBox="0 0 376 284">
<defs>
<linearGradient id="wall" x1="0" y1="0" x2="1" y2="0"><stop offset="0" stop-color="#dcdedf"/><stop offset="0.6" stop-color="#d6d9db"/><stop offset="1" stop-color="#c5cacd"/></linearGradient>
<linearGradient id="blind" x1="0" y1="0" x2="0" y2="1"><stop offset="0" stop-color="#c9cec9"/><stop offset="0.6" stop-color="#bfc6c1"/><stop offset="1" stop-color="#a9b1ad"/></linearGradient>
<linearGradient id="table" x1="0" y1="0" x2="0.2" y2="1"><stop offset="0" stop-color="#4a3226"/><stop offset="0.5" stop-color="#5e3e2a"/><stop offset="1" stop-color="#7a5236"/></linearGradient>
<linearGradient id="cab" x1="0" y1="0" x2="1" y2="0"><stop offset="0" stop-color="#c2b59c"/><stop offset="0.7" stop-color="#cabfaa"/><stop offset="1" stop-color="#b3a995"/></linearGradient>
<linearGradient id="motor" x1="0" y1="0" x2="0" y2="1"><stop offset="0" stop-color="#4f7488"/><stop offset="1" stop-color="#2f4c5c"/></linearGradient>
<linearGradient id="tube" x1="0" y1="0" x2="1" y2="0"><stop offset="0" stop-color="#1e2026"/><stop offset="0.5" stop-color="#3c4048"/><stop offset="1" stop-color="#1a1c22"/></linearGradient>
</defs>
<rect width="376" height="284" fill="url(#wall)"/>
<polygon points="0,0 122,0 122,165 110,160 0,190" fill="url(#blind)"/>
<g stroke="#9ea59f" stroke-width="0.9" stroke-dasharray="6,5" opacity="0.7">
<line x1="0" y1="9" x2="97" y2="13"/><line x1="0" y1="27" x2="122" y2="33"/><line x1="0" y1="45" x2="122" y2="48"/><line x1="0" y1="63" x2="122" y2="65"/><line x1="0" y1="80" x2="122" y2="80"/><line x1="0" y1="97" x2="122" y2="95"/><line x1="0" y1="113" x2="122" y2="111"/><line x1="0" y1="129" x2="122" y2="125"/><line x1="0" y1="145" x2="110" y2="140"/><line x1="0" y1="161" x2="100" y2="155"/>
</g>
<polygon points="100,105 122,100 122,165 95,170" fill="#8d9590" opacity="0.5"/>
<rect x="97" y="3" width="26" height="28" fill="#f2f5f9"/>
<rect x="121" y="0" width="9" height="170" fill="#b9bebf"/>
<rect x="126" y="0" width="2" height="170" fill="#6c7274"/>
<line x1="135.5" y1="0" x2="135.5" y2="150" stroke="#c4c8ca" stroke-width="1"/>
<polygon points="188,0 250,0 250,12 188,4" fill="#3a3e48"/>
<polygon points="299,14 335,14 326,132 289,132 284,88" fill="url(#tube)"/>
<rect x="316" y="34" width="17" height="4" fill="#3d6fb0"/>
<rect x="326" y="67" width="4" height="11" fill="#e8d020"/><rect x="324" y="83" width="4" height="11" fill="#e8d020"/>
<polygon points="0,190 110,160 123,165 376,125 376,155 196,274 196,284 0,284" fill="url(#table)"/>
<polygon points="196,258 376,150 376,168 196,276" fill="#46301f"/>
<polygon points="196,276 376,168 376,284 196,284" fill="url(#cab)"/>
<path d="M250,284 C255,240 262,220 270,200 M300,284 C298,250 305,220 320,190" stroke="#a89e88" stroke-width="2" fill="none" opacity="0.6"/>
<polygon points="113,160 322,150 322,159 199,214 113,168" fill="#87522c"/>
<polygon points="113,166 199,210 199,216 113,172" fill="#a06a3c"/>
<polygon points="199,210 322,156 322,162 199,216" fill="#b07640"/>
<polygon points="199,216 322,162 322,168 199,222" fill="#2e2018" opacity="0.6"/>
<rect x="121" y="142" width="70" height="34" fill="#3d6076"/>
<rect x="131" y="116" width="36" height="42" rx="7" fill="#3f6a80"/>
<circle cx="139" cy="132" r="5" fill="#8a9296"/>
<polygon points="160,112 256,101 258,132 166,144" fill="url(#motor)"/>
<ellipse cx="255" cy="108" rx="12" ry="11" fill="#1f2428"/>
<rect x="252" y="97" width="56" height="56" rx="9" fill="#557283"/>
<rect x="253" y="117" width="25" height="34" rx="8" fill="#2f3e48"/>
<rect x="261" y="85" width="26" height="10" rx="3" fill="#9aa0a4" transform="rotate(-12 274 90)"/>
<path d="M300,110 C310,130 305,150 296,160" stroke="#e0e0e0" stroke-width="2" fill="none"/>
<rect x="144" y="95" width="9" height="22" fill="#a8aeb0"/>
<rect x="144" y="79" width="9" height="16" fill="#3a3c3e"/>
<path d="M147,79 C146,68 152,62 156,66 C160,72 162,95 166,110" stroke="#151515" stroke-width="1.8" fill="none"/>
<rect x="208" y="129" width="44" height="48" fill="#2a3038"/>
<polygon points="208,129 246,126 252,138 214,142" fill="#ececea"/>
<rect x="214" y="142" width="38" height="35" fill="#3a4450"/>
<polygon points="30,183 84,170 112,185 109,205 55,227 32,206" fill="#17181b"/>
<rect x="28" y="180" width="11" height="8" rx="2" fill="#d85a26"/><rect x="77" y="167" width="11" height="8" rx="2" fill="#d85a26"/><rect x="100" y="182" width="11" height="8" rx="2" fill="#d85a26"/><rect x="46" y="199" width="13" height="8" rx="2" fill="#d85a26"/><rect x="48" y="219" width="13" height="8" rx="2" fill="#d85a26"/>
<polygon points="60,199 95,189 97,192 62,202" fill="#cfcfcf"/>
<circle cx="67" cy="210" r="3.2" fill="none" stroke="#50ff60" stroke-width="1.6"/><circle cx="79" cy="206" r="3.2" fill="none" stroke="#50ff60" stroke-width="1.6"/><circle cx="89" cy="203" r="2.5" fill="#4c6a50"/>
<ellipse cx="77" cy="237" rx="10" ry="6" fill="#3a7030" opacity="0.4"/>
<polygon points="111,185 142,181 152,190 152,214 123,220 111,211" fill="#d6d6d4"/>
<polygon points="111,185 142,181 152,190 122,194" fill="#e6e6e4"/>
<g stroke="#141414" stroke-width="1.7" fill="none">
<path d="M0,196 C30,185 50,165 61,135 C63,125 68,122 69,132 C70,150 75,160 90,158 C105,155 110,160 118,150"/>
<path d="M0,208 C25,198 45,185 70,175 C95,165 112,168 120,160"/>
<path d="M68,212 C80,230 100,255 130,270 C150,280 175,280 190,275"/>
<path d="M80,208 C100,225 130,245 160,258 C175,265 185,270 200,284"/>
<path d="M92,205 C110,215 135,235 165,255 C180,268 190,275 195,284"/>
<path d="M138,210 C148,230 155,255 158,284"/>
<path d="M190,142 C205,180 215,215 223,250 C228,270 240,280 255,284"/>
<path d="M220,170 C235,205 245,235 250,284"/>
<path d="M319,120 C322,150 320,200 318,284"/>
<path d="M322,150 C345,170 352,200 335,240 C320,265 300,280 290,284"/>
<path d="M355,165 C372,200 372,240 368,284"/>
</g>
<rect x="0" y="0" width="376" height="1.5" fill="#111"/><rect x="0" y="282.5" width="376" height="1.5" fill="#111"/>
</svg>
<svg class="a" style="left:0;top:0" width="660" height="900">
<line x1="581" y1="446" x2="352" y2="571" stroke="#ff0000" stroke-width="3"/>
<polygon points="337,579 351,563 356,575" fill="#ff0000"/>
<line x1="581" y1="855" x2="380" y2="647" stroke="#ff0000" stroke-width="3"/>
<polygon points="369,636 386,645 377,653" fill="#ff0000"/>
</svg>
<div class="a" style="left:1719px;top:117px;width:201px;height:923px;background:#d7d5d9"></div>
<div class="a" style="left:1728px;top:120px;width:45px;height:21px;background:#fff;border:1px solid #888;border-bottom:none"></div>
<div class="a" style="left:1773px;top:122px;width:43px;height:19px;background:#e6e6e6;border:1px solid #999;border-bottom:none"></div>
<div class="a" style="left:1773px;top:140px;width:123px;height:1px;background:#888"></div>
<div class="t" style="left:1737px;top:126px;font-size:11.5px;color:#f05a28">Voies</div>
<div class="t" style="left:1781px;top:127px;font-size:11.5px;color:#111">Tiroir</div>
<svg class="a" style="left:1900px;top:124px" width="10" height="12"><path d="M3,2 L7,6 L3,10" stroke="#111" stroke-width="1.6" fill="none"/></svg>
<div class="a" style="left:1727px;top:147px;width:167px;height:20px;background:#fff;border-top:1px solid #777;border-left:1px solid #777"></div>
<div class="t" style="left:1730px;top:152px;font-size:11px;color:#888">Recherche</div>
<svg class="a" style="left:1875px;top:149px" width="16" height="16"><circle cx="6.5" cy="6.5" r="4.5" fill="none" stroke="#111" stroke-width="2"/><path d="M10,10 L14,14" stroke="#111" stroke-width="2.4"/></svg>
<svg class="a" style="left:1900px;top:152px" width="16" height="12"><path d="M2,3 L8,9 L14,3" stroke="#111" stroke-width="1.8" fill="none"/></svg>
<svg class="a" style="left:1730px;top:174px" width="32" height="14"><polygon points="2,3 9,3 5.5,9.5" fill="#666"/><path d="M16,1.5 h4.5 l1.2,1.2 h6.8 v10.3 h-12.5 z" fill="#7a7a7a"/><rect x="16.3" y="3.8" width="12.2" height="9" fill="#b4b4b4"/><rect x="16.3" y="3.8" width="12.2" height="1" fill="#dcdcdc"/></svg>
<div class="tree" style="left:1765px;top:176px">AI</div>
<svg class="a" style="left:1753px;top:194px" width="16" height="14"><path d="M1,8 C1.5,1 4.5,1 5,7 C5.5,13 9,13 9.5,7 C10,1 13,1 13.5,8 C13.8,11 14.3,12.5 15,12" fill="none" stroke="#f05a28" stroke-width="1.3"/></svg>
<div class="tree" style="left:1772px;top:196px">AI 1</div>
<svg class="a" style="left:1753px;top:214px" width="16" height="14"><path d="M1,8 C1.5,1 4.5,1 5,7 C5.5,13 9,13 9.5,7 C10,1 13,1 13.5,8 C13.8,11 14.3,12.5 15,12" fill="none" stroke="#f05a28" stroke-width="1.3"/></svg>
<div class="tree" style="left:1772px;top:216px">AI 2</div>
<svg class="a" style="left:1753px;top:234px" width="16" height="14"><path d="M1,8 C1.5,1 4.5,1 5,7 C5.5,13 9,13 9.5,7 C10,1 13,1 13.5,8 C13.8,11 14.3,12.5 15,12" fill="none" stroke="#f05a28" stroke-width="1.3"/></svg>
<div class="tree" style="left:1772px;top:236px">AI 4</div>
<svg class="a" style="left:1730px;top:254px" width="32" height="14"><polygon points="2,3 9,3 5.5,9.5" fill="#666"/><path d="M16,1.5 h4.5 l1.2,1.2 h6.8 v10.3 h-12.5 z" fill="#7a7a7a"/><rect x="16.3" y="3.8" width="12.2" height="9" fill="#b4b4b4"/><rect x="16.3" y="3.8" width="12.2" height="1" fill="#dcdcdc"/></svg>
<div class="tree" style="left:1765px;top:256px">Math</div>
<svg class="a" style="left:1753px;top:274px" width="16" height="14"><path d="M1.5,1 V13.5 H15" fill="none" stroke="#222" stroke-width="1"/><path d="M4.5,13 V5 M8,13 V9 M11.5,13 V9" stroke="#f05a28" stroke-width="1"/></svg>
<div class="tree" style="left:1772px;top:276px">AI 1/AmplFFT</div>
<svg class="a" style="left:1753px;top:294px" width="16" height="14"><path d="M1.5,1 V13.5 H15" fill="none" stroke="#222" stroke-width="1"/><path d="M4.5,13 V5 M8,13 V9 M11.5,13 V9" stroke="#f05a28" stroke-width="1"/></svg>
<div class="tree" style="left:1772px;top:296px">AI 2/AmplFFT</div>
<svg class="a" style="left:1753px;top:314px" width="16" height="14"><path d="M1.5,1 V13.5 H15" fill="none" stroke="#222" stroke-width="1"/><path d="M4.5,13 V5 M8,13 V9 M11.5,13 V9" stroke="#f05a28" stroke-width="1"/></svg>
<div class="tree" style="left:1772px;top:316px">AI 1/v/AmplFFT</div>
<svg class="a" style="left:1753px;top:334px" width="16" height="14"><path d="M1.5,1 V13.5 H15" fill="none" stroke="#222" stroke-width="1"/><path d="M4.5,13 V5 M8,13 V9 M11.5,13 V9" stroke="#f05a28" stroke-width="1"/></svg>
<div class="tree" style="left:1772px;top:336px">AI 2/v/AmplFFT</div>
<svg class="a" style="left:1753px;top:354px" width="16" height="14"><path d="M1,8 C1.5,1 4.5,1 5,7 C5.5,13 9,13 9.5,7 C10,1 13,1 13.5,8 C13.8,11 14.3,12.5 15,12" fill="none" stroke="#f05a28" stroke-width="1.3"/></svg>
<div class="tree" style="left:1772px;top:356px">FFT block count</div>
<svg class="a" style="left:1753px;top:374px" width="16" height="14"><path d="M4.8,1.3 C3.6,1 3,2 3,4 V9 C3,11 2.5,11.5 1,11.2" fill="none" stroke="#222" stroke-width="1.1"/><text x="4.3" y="9.2" font-size="6.5" fill="#f05a28" font-family="Liberation Sans">(dt)</text></svg>
<div class="tree" style="left:1772px;top:376px">AI 1/v</div>
<svg class="a" style="left:1753px;top:394px" width="16" height="14"><path d="M4.8,1.3 C3.6,1 3,2 3,4 V9 C3,11 2.5,11.5 1,11.2" fill="none" stroke="#222" stroke-width="1.1"/><text x="4.3" y="9.2" font-size="6.5" fill="#f05a28" font-family="Liberation Sans">(dt)</text></svg>
<div class="tree" style="left:1772px;top:396px">AI 2/v</div>
<svg class="a" style="left:1753px;top:414px" width="16" height="14"><path d="M1,12.4 L9.7,3.6 M1,12.4 H13" fill="none" stroke="#111" stroke-width="1.2"/><path d="M6.8,6.8 Q8.6,9 8.4,12" fill="none" stroke="#f05a28" stroke-width="1"/></svg>
<div class="tree" style="left:1772px;top:416px">AI 4/Trigger</div>
<svg class="a" style="left:1753px;top:434px" width="16" height="14"><path d="M1,12.4 L9.7,3.6 M1,12.4 H13" fill="none" stroke="#111" stroke-width="1.2"/><path d="M6.8,6.8 Q8.6,9 8.4,12" fill="none" stroke="#f05a28" stroke-width="1"/></svg>
<div class="tree" style="left:1772px;top:436px">AI 4/Angle</div>
<svg class="a" style="left:1753px;top:454px" width="16" height="14"><path d="M1,12.4 L9.7,3.6 M1,12.4 H13" fill="none" stroke="#111" stroke-width="1.2"/><path d="M6.8,6.8 Q8.6,9 8.4,12" fill="none" stroke="#f05a28" stroke-width="1"/></svg>
<div class="tree" style="left:1772px;top:456px">AI 4/Frequency</div>
<svg class="a" style="left:1753px;top:474px" width="16" height="14"><rect x="1" y="1.5" width="12" height="9" rx="1" fill="#f05a28"/><path d="M1.5,2 L7,7 L12.5,2 M1.5,10 L5,6.5 M12.5,10 L9,6.5" fill="none" stroke="#fbd3c0" stroke-width="0.7"/></svg>
<div class="tree" style="left:1772px;top:476px">AI 1/Envelope</div>
<svg class="a" style="left:1753px;top:494px" width="16" height="14"><rect x="1" y="1.5" width="12" height="9" rx="1" fill="#f05a28"/><path d="M1.5,2 L7,7 L12.5,2 M1.5,10 L5,6.5 M12.5,10 L9,6.5" fill="none" stroke="#fbd3c0" stroke-width="0.7"/></svg>
<div class="tree" style="left:1772px;top:496px">AI 2/Envelope</div>
<svg class="a" style="left:1730px;top:514px" width="32" height="14"><polygon points="2,3 9,3 5.5,9.5" fill="#666"/><path d="M16,1.5 h4.5 l1.2,1.2 h6.8 v10.3 h-12.5 z" fill="#7a7a7a"/><rect x="16.3" y="3.8" width="12.2" height="9" fill="#b4b4b4"/><rect x="16.3" y="3.8" width="12.2" height="1" fill="#dcdcdc"/></svg>
<div class="tree" style="left:1765px;top:516px">Variables/Données d'en...</div>
<svg class="a" style="left:1754px;top:534px" width="16" height="14"><rect x="0.5" y="0.5" width="12" height="3.6" rx="1.5" fill="#3c3c3c"/><rect x="0.5" y="5" width="12" height="3.6" rx="1.5" fill="#3c3c3c"/><rect x="0.5" y="9.5" width="12" height="3.6" rx="1.5" fill="#3c3c3c"/><path d="M2,2.3 h9 M2,6.8 h9 M2,11.3 h9" stroke="#777" stroke-width="0.6"/></svg>
<div class="tree" style="left:1772px;top:536px">Info</div>
<svg class="a" style="left:1754px;top:554px" width="16" height="14"><rect x="0.5" y="0.5" width="12" height="3.6" rx="1.5" fill="#3c3c3c"/><rect x="0.5" y="5" width="12" height="3.6" rx="1.5" fill="#3c3c3c"/><rect x="0.5" y="9.5" width="12" height="3.6" rx="1.5" fill="#3c3c3c"/><path d="M2,2.3 h9 M2,6.8 h9 M2,11.3 h9" stroke="#777" stroke-width="0.6"/></svg>
<div class="tree" style="left:1772px;top:556px">Input</div>
<svg class="a" style="left:1730px;top:574px" width="32" height="14"><polygon points="2,3 9,3 5.5,9.5" fill="#666"/><path d="M16,1.5 h4.5 l1.2,1.2 h6.8 v10.3 h-12.5 z" fill="#7a7a7a"/><rect x="16.3" y="3.8" width="12.2" height="9" fill="#b4b4b4"/><rect x="16.3" y="3.8" width="12.2" height="1" fill="#dcdcdc"/></svg>
<div class="tree" style="left:1765px;top:576px">Event log</div>
<svg class="a" style="left:1753px;top:594px" width="16" height="14"><path d="M1,8 C1.5,1 4.5,1 5,7 C5.5,13 9,13 9.5,7 C10,1 13,1 13.5,8 C13.8,11 14.3,12.5 15,12" fill="none" stroke="#f05a28" stroke-width="1.3"/></svg>
<div class="tree" style="left:1772px;top:596px">Évèn. de données</div>
<div class="a" style="left:0;top:1040px;width:1920px;height:40px;background:linear-gradient(90deg,#1d3840 0%,#213a42 43%,#1f303e 68%,#1e2c40 79%,#1c2a45 79.1%,#1c2a46 100%)"></div>
<svg class="a" style="left:16px;top:1052px" width="17" height="17"><path d="M0,2.3 L7,1.3 V7.6 H0 Z M8,1.1 L16,0 V7.6 H8 Z M0,8.6 H7 V14.9 L0,13.9 Z M8,8.6 H16 V16.2 L8,15.1 Z" fill="#fff"/></svg>
<div class="a" style="left:48px;top:1040px;width:343px;height:40px;background:#f0f0f0"></div>
<svg class="a" style="left:58px;top:1050px" width="20" height="20"><circle cx="11.5" cy="7.5" r="5.5" fill="none" stroke="#222" stroke-width="1.3"/><path d="M7.5,11.5 L2,17" stroke="#222" stroke-width="1.5"/></svg>
<div class="t" style="left:88px;top:1053px;font-size:14.7px;color:#222">Taper ici pour rechercher</div>
<svg class="a" style="left:315px;top:1042px" width="76" height="38">
<circle cx="6" cy="13" r="1.5" fill="#a880e0"/><circle cx="14" cy="19" r="2.5" fill="none" stroke="#f080b0" stroke-width="1.2"/>
<path d="M30,36 L42,14 C45,8 43,4 38,4 C33,4 31,8 34,14 L46,36" fill="none" stroke="#f06aa0" stroke-width="4"/>
<path d="M55,18 l1.5,3 3,1.5 -3,1.5 -1.5,3 -1.5,-3 -3,-1.5 3,-1.5z" fill="#b080e0"/><circle cx="69" cy="12" r="1.8" fill="#f080b0"/>
</svg>
<svg class="a" style="left:405px;top:1046px" width="28" height="28"><defs><linearGradient id="ffg" x1="0.8" y1="0" x2="0.3" y2="1"><stop offset="0" stop-color="#fff44f"/><stop offset="0.45" stop-color="#ff9a2e"/><stop offset="0.8" stop-color="#ff4a4a"/><stop offset="1" stop-color="#f0107a"/></linearGradient><radialGradient id="ffp" cx="0.5" cy="0.3" r="0.7"><stop offset="0" stop-color="#b040f0"/><stop offset="1" stop-color="#5a3ad0"/></radialGradient></defs>
<path d="M14,3 C20,6 25,10 25,15 C25,21 20,25.5 14,25.5 C7.5,25.5 2.5,21 2.5,15 C2.5,11 4.5,7.5 8,5.5 C7.5,8 8.5,9 10,9 C11,6 12.5,4 14,3 Z" fill="url(#ffg)"/>
<path d="M17,1.5 C21,4 24.5,8 24.5,13 C22,9 19,8 17,7.5 Z" fill="#ffe030"/>
<circle cx="13.5" cy="14" r="5" fill="url(#ffp)"/>
<path d="M6,12 C8,10 11,10 13,11 C11,12.5 9.5,13 8,13 Z" fill="#ffa020"/>
</svg>
<svg class="a" style="left:456px;top:1050px" width="24" height="20"><path d="M1,1 h8.5 l1.5,1.5 H1 Z" fill="#e0a000"/><rect x="1" y="2.5" width="22" height="15.5" fill="#ffd45a"/><rect x="1" y="2.5" width="22" height="2" fill="#ffe07a"/><path d="M5,19 V12 C5,11 5.5,10.5 6.5,10.5 H17.5 C18.5,10.5 19,11 19,12 V19 H15.5 V14 H8.5 V19 Z" fill="#3a96e0"/></svg>
<div class="a" style="left:493px;top:1040px;width:160px;height:40px;background:#4a5c66"></div>
<div class="a" style="left:493px;top:1078px;width:160px;height:2px;background:#67b0f0"></div>
<svg class="a" style="left:504px;top:1050px" width="22" height="20"><polygon points="11,1 2,17 20,17" fill="#f05a28"/><path d="M11,1 V11 L1.5,17.5 M11,11 L20.5,17.5" stroke="#4a5c66" stroke-width="1.2" fill="none"/></svg>
<div class="t" style="left:531px;top:1054px;font-size:12px;letter-spacing:-0.1px;color:#fff">DewesoftX - Fichier...</div>
<div class="a" style="left:653px;top:1040px;width:161px;height:40px;background:#a2632c"></div>
<div class="a" style="left:653px;top:1078px;width:161px;height:2px;background:#ff7a10"></div>
<svg class="a" style="left:664px;top:1048px" width="24" height="24"><rect x="0" y="0" width="24" height="24" rx="4" fill="#f8e020"/><circle cx="12" cy="12" r="7" fill="none" stroke="#111" stroke-width="2"/><path d="M8.5,11.5 L11.5,14.5 L17,7" stroke="#111" stroke-width="2.2" fill="none"/></svg>
<div class="t" style="left:693px;top:1054px;font-size:12.5px;color:#fff">NCP Alert</div>
<svg class="a" style="left:1700px;top:1040px" width="220" height="40">
<path d="M7,23 L12,18 L17,23" stroke="#fff" stroke-width="1.3" fill="none"/>
<g transform="translate(-7,0)"><path d="M37,14 L44,12 L51,14 V21 C51,26 47,29 44,30 C41,29 37,26 37,21 Z" fill="#fff" stroke="#111" stroke-width="1"/><path d="M44,12 V30 M37,21 H51" stroke="#111" stroke-width="1.2"/><circle cx="49" cy="27" r="4" fill="#1f9a3a"/><path d="M47,27 l1.5,1.5 2.5,-3" stroke="#fff" stroke-width="1" fill="none"/></g>
<path d="M55,16 v4 M58,16 v4 M54,20 h5 v3 h-5z M56.5,23 v5" stroke="#fff" stroke-width="1" fill="none"/><rect x="60" y="17" width="9" height="8" fill="none" stroke="#fff" stroke-width="1.2"/>
<rect x="78" y="15" width="14" height="10" fill="none" stroke="#fff" stroke-width="1.2"/><path d="M85,25 v3 M81,28 h8 M78,15 h4 v4" stroke="#fff" stroke-width="1.2" fill="none"/>
<text x="132" y="15" font-size="12" letter-spacing="-0.6" fill="#fff" font-family="Liberation Sans" text-anchor="middle">10:08</text>
<text x="132" y="33" font-size="11.5" letter-spacing="-0.2" fill="#fff" font-family="Liberation Sans" text-anchor="middle">19/10/2022</text>
<path d="M179,13 h16 v10 h-10 l-4,4 v-4 h-2z" fill="#fff"/><path d="M182,16 h10 M182,19 h10" stroke="#1b2846" stroke-width="1"/>
<circle cx="194" cy="27" r="8" fill="#333" stroke="#888" stroke-width="1"/><text x="194" y="31" font-size="11" fill="#fff" font-family="Liberation Sans" text-anchor="middle" font-weight="bold">21</text>
<line x1="216.5" y1="0" x2="216.5" y2="40" stroke="#667" stroke-width="1"/>
</svg>
</body></html>
